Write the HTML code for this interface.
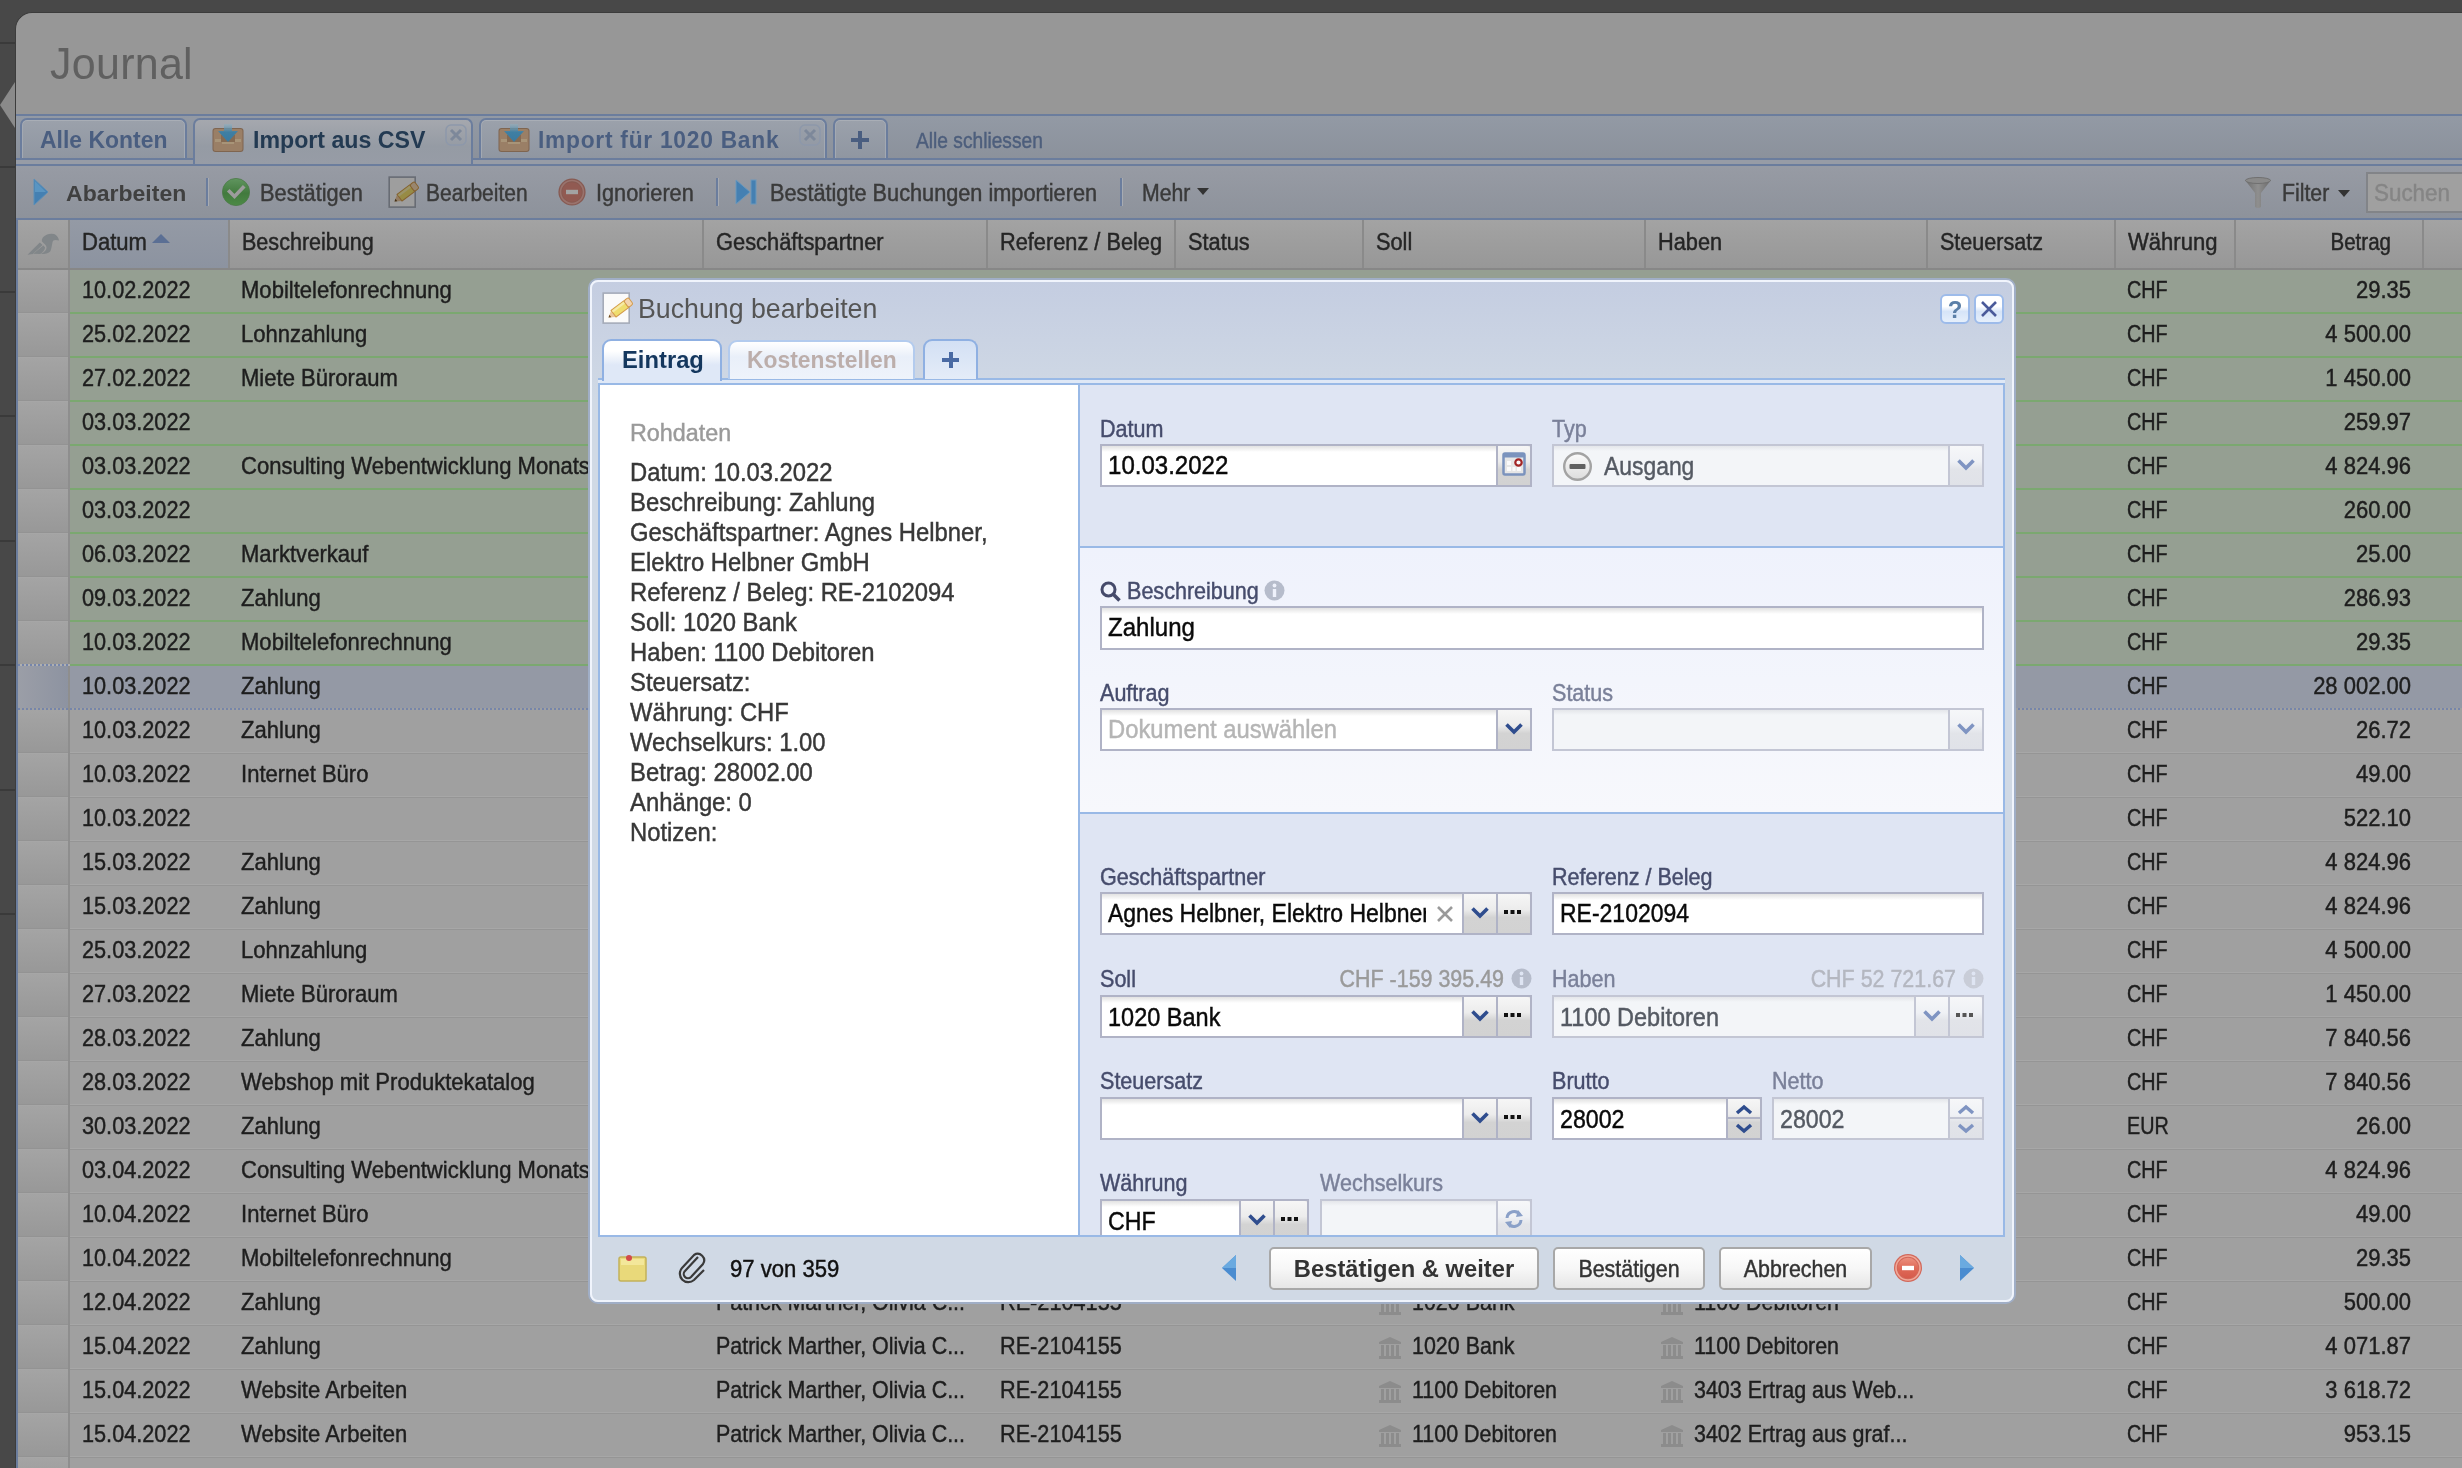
<!DOCTYPE html><html><head><meta charset="utf-8"><style>
html,body{margin:0;padding:0}
body{width:2462px;height:1468px;overflow:hidden;position:relative;background:#484848;font-family:"Liberation Sans", sans-serif}
.t{position:absolute;white-space:pre;font-family:"Liberation Sans", sans-serif}
#root{position:absolute;left:0;top:0;width:2462px;height:1468px;will-change:transform}
.r{position:absolute;box-sizing:border-box}
</style></head><body><div id="root">
<div class="r" style="left:0px;top:42px;width:15px;height:2px;background:#3a3a3a"></div>
<div class="r" style="left:0px;top:166px;width:15px;height:2px;background:#3a3a3a"></div>
<div class="r" style="left:0px;top:291px;width:15px;height:2px;background:#3a3a3a"></div>
<div class="r" style="left:0px;top:415px;width:15px;height:2px;background:#3a3a3a"></div>
<div class="r" style="left:0px;top:540px;width:15px;height:2px;background:#3a3a3a"></div>
<div class="r" style="left:0px;top:664px;width:15px;height:2px;background:#3a3a3a"></div>
<div class="r" style="left:0px;top:789px;width:15px;height:2px;background:#3a3a3a"></div>
<div class="r" style="left:0px;top:913px;width:15px;height:2px;background:#3a3a3a"></div>
<svg class="r" style="left:0px;top:82px" width="15" height="46" viewBox="0 0 15 46"><polygon points="15,0 15,46 0,23" fill="#8a8a8a"/></svg>
<div class="r" style="left:15px;top:12px;width:2447px;height:1456px;background:#979797;border-top-left-radius:17px;border-top:1px solid #3c3c3c;border-left:1px solid #3c3c3c"></div>
<div class="t" style="left:50px;top:41px;font-size:45px;line-height:45px;color:#606060;font-weight:300;transform:scaleX(0.955);transform-origin:0 0;letter-spacing:0.3px">Journal</div>
<div class="r" style="left:16px;top:114px;width:2446px;height:51px;background:linear-gradient(#939aa5,#8a909a)"></div>
<div class="r" style="left:16px;top:114px;width:2446px;height:2px;background:#6b7d9d"></div>
<div class="r" style="left:16px;top:158px;width:2446px;height:2px;background:#6b7d9d"></div>
<div class="r" style="left:16px;top:160px;width:2446px;height:4px;background:#979ca6"></div>
<div class="r" style="left:16px;top:164px;width:2446px;height:2px;background:#6b7d9d"></div>
<div class="r" style="left:20px;top:118px;width:167px;height:41px;background:linear-gradient(#9ba1ab,#8f96a1);border:2px solid #6b7d9d;border-bottom:none;border-radius:7px 7px 0 0;box-shadow:inset 0 1px 0 #a9aeb6, inset 1px 0 0 #a3a9b2, inset -1px 0 0 #a3a9b2"></div>
<div class="r" style="left:479px;top:118px;width:348px;height:41px;background:linear-gradient(#9ba1ab,#8f96a1);border:2px solid #6b7d9d;border-bottom:none;border-radius:7px 7px 0 0;box-shadow:inset 0 1px 0 #a9aeb6, inset 1px 0 0 #a3a9b2, inset -1px 0 0 #a3a9b2"></div>
<div class="r" style="left:833px;top:118px;width:55px;height:41px;background:linear-gradient(#9ba1ab,#8f96a1);border:2px solid #6b7d9d;border-bottom:none;border-radius:7px 7px 0 0;box-shadow:inset 0 1px 0 #a9aeb6, inset 1px 0 0 #a3a9b2, inset -1px 0 0 #a3a9b2"></div>
<div class="r" style="left:16px;top:158px;width:2446px;height:2px;background:#6b7d9d"></div>
<div class="r" style="left:193px;top:118px;width:280px;height:46px;background:linear-gradient(#a5a8ae,#959ba4 60%,#979ca6);border:2px solid #6b7d9d;border-bottom:none;border-radius:7px 7px 0 0"></div>
<div class="t" style="left:40px;top:129px;font-size:23.3px;line-height:23.3px;color:#4a5e80;font-weight:700;transform:scaleX(0.985);transform-origin:0 0;">Alle Konten</div>
<div class="t" style="left:253px;top:129px;font-size:23.5px;line-height:23.5px;color:#233a52;font-weight:700;transform:scaleX(0.985);transform-origin:0 0;">Import aus CSV</div>
<div class="t" style="left:538px;top:129px;font-size:23.5px;line-height:23.5px;color:#4a5e80;font-weight:700;transform:scaleX(0.97);transform-origin:0 0;letter-spacing:0.75px">Import für 1020 Bank</div>
<div class="t" style="left:916px;top:130px;font-size:21.8px;line-height:21.8px;color:#4d5e7c;font-weight:400;transform:scaleX(0.88);transform-origin:0 0;-webkit-text-stroke:0.45px currentColor;">Alle schliessen</div>
<div class="r" style="left:851px;top:138px;width:18px;height:4px;background:#4a5e80"></div>
<div class="r" style="left:858px;top:131px;width:4px;height:18px;background:#4a5e80"></div>
<svg class="r" style="left:212px;top:123px" width="32" height="30" viewBox="0 0 32 30">
<defs><linearGradient id="arw" x1="0" y1="0" x2="0" y2="1"><stop offset="0" stop-color="#8fb0c0" stop-opacity="0.5"/><stop offset="0.45" stop-color="#3f7fa3"/><stop offset="1" stop-color="#3a7aa0"/></linearGradient></defs>
<rect x="0.5" y="5" width="31" height="24" rx="3" fill="#7f6550"/>
<rect x="1.5" y="6" width="29" height="22" rx="2" fill="#9a7f66"/>
<rect x="3" y="16" width="8" height="3" fill="#a89478"/>
<rect x="21" y="16" width="8" height="3" fill="#a89478"/>
<rect x="10" y="19" width="12" height="2" fill="#a89478"/>
<rect x="9" y="12" width="14" height="7" fill="#856a52"/>
<path d="M12 1 h8 v7 h6 l-10 11 l-10 -11 h6z" fill="url(#arw)"/>
</svg>
<svg class="r" style="left:498px;top:123px" width="32" height="30" viewBox="0 0 32 30">
<defs><linearGradient id="arw" x1="0" y1="0" x2="0" y2="1"><stop offset="0" stop-color="#8fb0c0" stop-opacity="0.5"/><stop offset="0.45" stop-color="#3f7fa3"/><stop offset="1" stop-color="#3a7aa0"/></linearGradient></defs>
<rect x="0.5" y="5" width="31" height="24" rx="3" fill="#7f6550"/>
<rect x="1.5" y="6" width="29" height="22" rx="2" fill="#9a7f66"/>
<rect x="3" y="16" width="8" height="3" fill="#a89478"/>
<rect x="21" y="16" width="8" height="3" fill="#a89478"/>
<rect x="10" y="19" width="12" height="2" fill="#a89478"/>
<rect x="9" y="12" width="14" height="7" fill="#856a52"/>
<path d="M12 1 h8 v7 h6 l-10 11 l-10 -11 h6z" fill="url(#arw)"/>
</svg>
<svg class="r" style="left:445px;top:124px" width="22" height="22" viewBox="0 0 22 22"><rect x="1" y="1" width="20" height="20" rx="5" fill="none" stroke="#8d98aa" stroke-width="1.5"/><path d="M6 6 L16 16 M16 6 L6 16" stroke="#7d889a" stroke-width="3"/></svg>
<svg class="r" style="left:799px;top:124px" width="22" height="22" viewBox="0 0 22 22"><rect x="1" y="1" width="20" height="20" rx="5" fill="none" stroke="#8d98aa" stroke-width="1.5"/><path d="M6 6 L16 16 M16 6 L6 16" stroke="#7d889a" stroke-width="3"/></svg>
<div class="r" style="left:16px;top:166px;width:2446px;height:53px;background:linear-gradient(#979ba4,#8d929b)"></div>
<div class="r" style="left:16px;top:218px;width:2446px;height:2px;background:#6b7d9d"></div>
<svg class="r" style="left:33px;top:178px" width="16" height="28" viewBox="0 0 16 28"><polygon points="1,1 15,14 1,27" fill="#4580b2" stroke="#5d8fb8" stroke-width="1"/><polygon points="2,3 13,14 2,14" fill="#5a95c2"/></svg>
<div class="t" style="left:66px;top:182px;font-size:22.8px;line-height:22.8px;color:#404040;font-weight:700;transform:scaleX(1.01);transform-origin:0 0;">Abarbeiten</div>
<div class="r" style="left:206px;top:178px;width:3px;height:28px;background:linear-gradient(90deg,#6b7d9d 0,#6b7d9d 2px,#a7abb2 2px)"></div>
<svg class="r" style="left:222px;top:178px" width="28" height="28" viewBox="0 0 28 28"><defs><linearGradient id="gk" x1="0" y1="0" x2="0" y2="1"><stop offset="0" stop-color="#60955f"/><stop offset="0.55" stop-color="#427a3e"/><stop offset="1" stop-color="#4c8a46"/></linearGradient></defs><circle cx="14" cy="14" r="13.6" fill="url(#gk)" stroke="#4b7a48" stroke-width="0.8"/><path d="M7.5 13.5 L12.5 18.5 L21 9.5" stroke="#9c9c9c" stroke-width="3.6" fill="none" stroke-linecap="square"/></svg>
<div class="t" style="left:260px;top:182px;font-size:23.1px;line-height:23.1px;color:#3a3a3a;font-weight:400;transform:scaleX(0.943);transform-origin:0 0;-webkit-text-stroke:0.45px currentColor;">Bestätigen</div>
<svg class="r" style="left:384px;top:172px;filter:brightness(0.63);" width="38" height="40" viewBox="0 0 38 40"><rect x="5.2" y="5.1" width="26" height="30" fill="#fafafa" stroke="#a5abb8" stroke-width="1.6"/>
<g transform="translate(10.5,29.5) rotate(-37) scale(0.9)">
<path d="M0 0 L7 -4.6 L7 4.6 Z" fill="#ebc79c"/>
<path d="M0 0 L2.6 -1.7 L2.6 1.7 Z" fill="#6a4a22"/>
<rect x="7" y="-4.6" width="17.5" height="9.2" fill="#efdd6e" stroke="#d39a4a" stroke-width="1.1"/>
<rect x="7.5" y="-3.8" width="16.5" height="2.5" fill="#f6eaa6"/>
<rect x="24.5" y="-4.6" width="6.5" height="9.2" rx="2.2" fill="#f3d4ae" stroke="#d39a4a" stroke-width="1.1"/>
</g></svg>
<div class="t" style="left:426px;top:182px;font-size:23.1px;line-height:23.1px;color:#3a3a3a;font-weight:400;transform:scaleX(0.91);transform-origin:0 0;-webkit-text-stroke:0.45px currentColor;">Bearbeiten</div>
<svg class="r" style="left:558px;top:178px" width="28" height="28" viewBox="0 0 28 28"><circle cx="14" cy="14" r="13.6" fill="#875a52"/><circle cx="14" cy="14" r="11.5" fill="none" stroke="#9a736d" stroke-width="1.6"/><circle cx="14" cy="14" r="9.8" fill="#915a52"/><rect x="8" y="11.8" width="12" height="4.4" fill="#a3a3a3"/></svg>
<div class="t" style="left:596px;top:182px;font-size:23.1px;line-height:23.1px;color:#3a3a3a;font-weight:400;transform:scaleX(0.94);transform-origin:0 0;-webkit-text-stroke:0.45px currentColor;">Ignorieren</div>
<div class="r" style="left:716px;top:178px;width:3px;height:28px;background:linear-gradient(90deg,#6b7d9d 0,#6b7d9d 2px,#a7abb2 2px)"></div>
<svg class="r" style="left:735px;top:178px" width="22" height="28" viewBox="0 0 22 28"><polygon points="1,2 15,14 1,26" fill="#4580b2" stroke="#6a98bd" stroke-width="1"/><rect x="16" y="2" width="5" height="24" fill="#4580b2" stroke="#6a98bd" stroke-width="1"/></svg>
<div class="t" style="left:770px;top:182px;font-size:23.1px;line-height:23.1px;color:#3a3a3a;font-weight:400;transform:scaleX(0.94);transform-origin:0 0;-webkit-text-stroke:0.45px currentColor;">Bestätigte Buchungen importieren</div>
<div class="r" style="left:1120px;top:178px;width:3px;height:28px;background:linear-gradient(90deg,#6b7d9d 0,#6b7d9d 2px,#a7abb2 2px)"></div>
<div class="t" style="left:1142px;top:182px;font-size:23.1px;line-height:23.1px;color:#3a3a3a;font-weight:400;transform:scaleX(0.92);transform-origin:0 0;-webkit-text-stroke:0.45px currentColor;">Mehr</div>
<svg class="r" style="left:1197px;top:188px" width="12" height="8" viewBox="0 0 12 8"><polygon points="0,0 12,0 6,7" fill="#333"/></svg>
<svg class="r" style="left:2243px;top:176px" width="30" height="34" viewBox="0 0 30 34"><defs><linearGradient id="fn" x1="0" x2="1"><stop offset="0" stop-color="#6d6d6d"/><stop offset="0.5" stop-color="#8f8f8f"/><stop offset="1" stop-color="#6a6a6a"/></linearGradient></defs><path d="M2 4 Q15 0 28 4 L18 17 L18 31 Q15 33 12 31 L12 17 Z" fill="url(#fn)"/><ellipse cx="15" cy="4.5" rx="12.5" ry="3" fill="#8a8a8a" stroke="#707070" stroke-width="1"/></svg>
<div class="t" style="left:2282px;top:182px;font-size:23.1px;line-height:23.1px;color:#3a3a3a;font-weight:400;transform:scaleX(0.92);transform-origin:0 0;-webkit-text-stroke:0.45px currentColor;">Filter</div>
<svg class="r" style="left:2338px;top:190px" width="12" height="8" viewBox="0 0 12 8"><polygon points="0,0 12,0 6,7" fill="#333"/></svg>
<div class="r" style="left:2366px;top:172px;width:100px;height:41px;background:#a0a0a0;border:2px solid #828488"></div>
<div class="t" style="left:2374px;top:182px;font-size:23.6px;line-height:23.6px;color:#858585;font-weight:400;transform:scaleX(0.95);transform-origin:0 0;-webkit-text-stroke:0.45px currentColor;">Suchen</div>
<div class="r" style="left:16px;top:220px;width:2446px;height:1248px;background:#a0a0a0"></div>
<div class="r" style="left:16px;top:220px;width:2px;height:1248px;background:#6b7d9d"></div>
<div class="r" style="left:18px;top:220px;width:2444px;height:49px;background:linear-gradient(#a3a3a3,#979797)"></div>
<div class="r" style="left:69px;top:220px;width:160px;height:48px;background:linear-gradient(#949aa5,#8c93a0)"></div>
<div class="r" style="left:18px;top:268px;width:2444px;height:2px;background:#878787"></div>
<div class="r" style="left:68px;top:220px;width:2px;height:48px;background:#8a8a8a"></div>
<div class="r" style="left:228px;top:220px;width:2px;height:48px;background:#8a8a8a"></div>
<div class="r" style="left:702px;top:220px;width:2px;height:48px;background:#8a8a8a"></div>
<div class="r" style="left:986px;top:220px;width:2px;height:48px;background:#8a8a8a"></div>
<div class="r" style="left:1174px;top:220px;width:2px;height:48px;background:#8a8a8a"></div>
<div class="r" style="left:1362px;top:220px;width:2px;height:48px;background:#8a8a8a"></div>
<div class="r" style="left:1644px;top:220px;width:2px;height:48px;background:#8a8a8a"></div>
<div class="r" style="left:1926px;top:220px;width:2px;height:48px;background:#8a8a8a"></div>
<div class="r" style="left:2114px;top:220px;width:2px;height:48px;background:#8a8a8a"></div>
<div class="r" style="left:2234px;top:220px;width:2px;height:48px;background:#8a8a8a"></div>
<div class="r" style="left:2422px;top:220px;width:2px;height:48px;background:#8a8a8a"></div>
<svg class="r" style="left:17px;top:222px" width="53" height="44" viewBox="0 0 53 44"><path d="M34.5 11.7 C39 11.5 41.5 15 42 18.5 C40 17.8 37.5 17.5 36 18.8 C35 21 35 25 33.5 29 C32 31.5 28 32 23.5 32 C27 30.5 29.8 28 29.5 25 C29 23 27 21.5 25 19.5 C24 16 28 12 34.5 11.7 Z" fill="#818689"/><path d="M22.8 20.5 L10.5 32.7 L15.8 32 L25.6 23 Z" fill="#818689"/><path d="M26.3 23.6 L16.3 31.8 L23.2 31.9 C26 30 28.2 27.5 28 25.2 Z" fill="#818689"/></svg>
<div class="t" style="left:82px;top:231px;font-size:23.1px;line-height:23.1px;color:#252525;font-weight:400;transform:scaleX(0.955);transform-origin:0 0;-webkit-text-stroke:0.45px currentColor;">Datum</div>
<div class="t" style="left:242px;top:231px;font-size:23.1px;line-height:23.1px;color:#252525;font-weight:400;transform:scaleX(0.933);transform-origin:0 0;-webkit-text-stroke:0.45px currentColor;">Beschreibung</div>
<div class="t" style="left:716px;top:231px;font-size:23.1px;line-height:23.1px;color:#252525;font-weight:400;transform:scaleX(0.946);transform-origin:0 0;-webkit-text-stroke:0.45px currentColor;">Geschäftspartner</div>
<div class="t" style="left:1000px;top:231px;font-size:23.1px;line-height:23.1px;color:#252525;font-weight:400;transform:scaleX(0.942);transform-origin:0 0;-webkit-text-stroke:0.45px currentColor;">Referenz / Beleg</div>
<div class="t" style="left:1188px;top:231px;font-size:23.1px;line-height:23.1px;color:#252525;font-weight:400;transform:scaleX(0.942);transform-origin:0 0;-webkit-text-stroke:0.45px currentColor;">Status</div>
<div class="t" style="left:1376px;top:231px;font-size:23.1px;line-height:23.1px;color:#252525;font-weight:400;transform:scaleX(0.942);transform-origin:0 0;-webkit-text-stroke:0.45px currentColor;">Soll</div>
<div class="t" style="left:1658px;top:231px;font-size:23.1px;line-height:23.1px;color:#252525;font-weight:400;transform:scaleX(0.942);transform-origin:0 0;-webkit-text-stroke:0.45px currentColor;">Haben</div>
<div class="t" style="left:1940px;top:231px;font-size:23.1px;line-height:23.1px;color:#252525;font-weight:400;transform:scaleX(0.933);transform-origin:0 0;-webkit-text-stroke:0.45px currentColor;">Steuersatz</div>
<div class="t" style="left:2128px;top:231px;font-size:23.1px;line-height:23.1px;color:#252525;font-weight:400;transform:scaleX(0.955);transform-origin:0 0;-webkit-text-stroke:0.45px currentColor;">Währung</div>
<div class="t" style="left:1591px;width:800px;text-align:right;top:231px;font-size:23.1px;line-height:23.1px;color:#252525;font-weight:400;transform:scaleX(0.89);transform-origin:100% 0;-webkit-text-stroke:0.45px currentColor;">Betrag</div>
<svg class="r" style="left:152px;top:234px" width="18" height="10" viewBox="0 0 18 10"><polygon points="0,9 18,9 9,0" fill="#5b6f94"/></svg>
<div class="r" style="left:70px;top:270px;width:2392px;height:42px;background:#959f92"></div>
<div class="r" style="left:70px;top:312px;width:2392px;height:2px;background:#7ba870"></div>
<div class="r" style="left:18px;top:270px;width:50px;height:42px;background:linear-gradient(#a4a4a4,#989898)"></div>
<div class="r" style="left:18px;top:312px;width:50px;height:1px;background:#939393"></div>
<div class="r" style="left:18px;top:313px;width:50px;height:1px;background:#a6a6a6"></div>
<div class="r" style="left:68px;top:270px;width:2px;height:44px;background:#8e8e8e"></div>
<div class="t" style="left:82px;top:278px;font-size:24.1px;line-height:24.1px;color:#1e1e1e;font-weight:400;transform:scaleX(0.9);transform-origin:0 0;-webkit-text-stroke:0.45px currentColor;">10.02.2022</div>
<div class="t" style="left:241px;top:278px;font-size:24.1px;line-height:24.1px;color:#1e1e1e;font-weight:400;transform:scaleX(0.915);transform-origin:0 0;-webkit-text-stroke:0.45px currentColor;">Mobiltelefonrechnung</div>
<div class="t" style="left:2127px;top:278px;font-size:24.1px;line-height:24.1px;color:#1e1e1e;font-weight:400;transform:scaleX(0.82);transform-origin:0 0;-webkit-text-stroke:0.45px currentColor;">CHF</div>
<div class="t" style="left:1611px;width:800px;text-align:right;top:278px;font-size:24.1px;line-height:24.1px;color:#1e1e1e;font-weight:400;transform:scaleX(0.913);transform-origin:100% 0;-webkit-text-stroke:0.45px currentColor;">29.35</div>
<div class="r" style="left:70px;top:314px;width:2392px;height:42px;background:#959f92"></div>
<div class="r" style="left:70px;top:356px;width:2392px;height:2px;background:#7ba870"></div>
<div class="r" style="left:18px;top:314px;width:50px;height:42px;background:linear-gradient(#a4a4a4,#989898)"></div>
<div class="r" style="left:18px;top:356px;width:50px;height:1px;background:#939393"></div>
<div class="r" style="left:18px;top:357px;width:50px;height:1px;background:#a6a6a6"></div>
<div class="r" style="left:68px;top:314px;width:2px;height:44px;background:#8e8e8e"></div>
<div class="t" style="left:82px;top:322px;font-size:24.1px;line-height:24.1px;color:#1e1e1e;font-weight:400;transform:scaleX(0.9);transform-origin:0 0;-webkit-text-stroke:0.45px currentColor;">25.02.2022</div>
<div class="t" style="left:241px;top:322px;font-size:24.1px;line-height:24.1px;color:#1e1e1e;font-weight:400;transform:scaleX(0.915);transform-origin:0 0;-webkit-text-stroke:0.45px currentColor;">Lohnzahlung</div>
<div class="t" style="left:2127px;top:322px;font-size:24.1px;line-height:24.1px;color:#1e1e1e;font-weight:400;transform:scaleX(0.82);transform-origin:0 0;-webkit-text-stroke:0.45px currentColor;">CHF</div>
<div class="t" style="left:1611px;width:800px;text-align:right;top:322px;font-size:24.1px;line-height:24.1px;color:#1e1e1e;font-weight:400;transform:scaleX(0.913);transform-origin:100% 0;-webkit-text-stroke:0.45px currentColor;">4 500.00</div>
<div class="r" style="left:70px;top:358px;width:2392px;height:42px;background:#959f92"></div>
<div class="r" style="left:70px;top:400px;width:2392px;height:2px;background:#7ba870"></div>
<div class="r" style="left:18px;top:358px;width:50px;height:42px;background:linear-gradient(#a4a4a4,#989898)"></div>
<div class="r" style="left:18px;top:400px;width:50px;height:1px;background:#939393"></div>
<div class="r" style="left:18px;top:401px;width:50px;height:1px;background:#a6a6a6"></div>
<div class="r" style="left:68px;top:358px;width:2px;height:44px;background:#8e8e8e"></div>
<div class="t" style="left:82px;top:366px;font-size:24.1px;line-height:24.1px;color:#1e1e1e;font-weight:400;transform:scaleX(0.9);transform-origin:0 0;-webkit-text-stroke:0.45px currentColor;">27.02.2022</div>
<div class="t" style="left:241px;top:366px;font-size:24.1px;line-height:24.1px;color:#1e1e1e;font-weight:400;transform:scaleX(0.915);transform-origin:0 0;-webkit-text-stroke:0.45px currentColor;">Miete Büroraum</div>
<div class="t" style="left:2127px;top:366px;font-size:24.1px;line-height:24.1px;color:#1e1e1e;font-weight:400;transform:scaleX(0.82);transform-origin:0 0;-webkit-text-stroke:0.45px currentColor;">CHF</div>
<div class="t" style="left:1611px;width:800px;text-align:right;top:366px;font-size:24.1px;line-height:24.1px;color:#1e1e1e;font-weight:400;transform:scaleX(0.913);transform-origin:100% 0;-webkit-text-stroke:0.45px currentColor;">1 450.00</div>
<div class="r" style="left:70px;top:402px;width:2392px;height:42px;background:#959f92"></div>
<div class="r" style="left:70px;top:444px;width:2392px;height:2px;background:#7ba870"></div>
<div class="r" style="left:18px;top:402px;width:50px;height:42px;background:linear-gradient(#a4a4a4,#989898)"></div>
<div class="r" style="left:18px;top:444px;width:50px;height:1px;background:#939393"></div>
<div class="r" style="left:18px;top:445px;width:50px;height:1px;background:#a6a6a6"></div>
<div class="r" style="left:68px;top:402px;width:2px;height:44px;background:#8e8e8e"></div>
<div class="t" style="left:82px;top:410px;font-size:24.1px;line-height:24.1px;color:#1e1e1e;font-weight:400;transform:scaleX(0.9);transform-origin:0 0;-webkit-text-stroke:0.45px currentColor;">03.03.2022</div>
<div class="t" style="left:2127px;top:410px;font-size:24.1px;line-height:24.1px;color:#1e1e1e;font-weight:400;transform:scaleX(0.82);transform-origin:0 0;-webkit-text-stroke:0.45px currentColor;">CHF</div>
<div class="t" style="left:1611px;width:800px;text-align:right;top:410px;font-size:24.1px;line-height:24.1px;color:#1e1e1e;font-weight:400;transform:scaleX(0.913);transform-origin:100% 0;-webkit-text-stroke:0.45px currentColor;">259.97</div>
<div class="r" style="left:70px;top:446px;width:2392px;height:42px;background:#959f92"></div>
<div class="r" style="left:70px;top:488px;width:2392px;height:2px;background:#7ba870"></div>
<div class="r" style="left:18px;top:446px;width:50px;height:42px;background:linear-gradient(#a4a4a4,#989898)"></div>
<div class="r" style="left:18px;top:488px;width:50px;height:1px;background:#939393"></div>
<div class="r" style="left:18px;top:489px;width:50px;height:1px;background:#a6a6a6"></div>
<div class="r" style="left:68px;top:446px;width:2px;height:44px;background:#8e8e8e"></div>
<div class="t" style="left:82px;top:454px;font-size:24.1px;line-height:24.1px;color:#1e1e1e;font-weight:400;transform:scaleX(0.9);transform-origin:0 0;-webkit-text-stroke:0.45px currentColor;">03.03.2022</div>
<div class="t" style="left:241px;top:454px;font-size:24.1px;line-height:24.1px;color:#1e1e1e;font-weight:400;transform:scaleX(0.915);transform-origin:0 0;-webkit-text-stroke:0.45px currentColor;">Consulting Webentwicklung Monatsa</div>
<div class="t" style="left:2127px;top:454px;font-size:24.1px;line-height:24.1px;color:#1e1e1e;font-weight:400;transform:scaleX(0.82);transform-origin:0 0;-webkit-text-stroke:0.45px currentColor;">CHF</div>
<div class="t" style="left:1611px;width:800px;text-align:right;top:454px;font-size:24.1px;line-height:24.1px;color:#1e1e1e;font-weight:400;transform:scaleX(0.913);transform-origin:100% 0;-webkit-text-stroke:0.45px currentColor;">4 824.96</div>
<div class="r" style="left:70px;top:490px;width:2392px;height:42px;background:#959f92"></div>
<div class="r" style="left:70px;top:532px;width:2392px;height:2px;background:#7ba870"></div>
<div class="r" style="left:18px;top:490px;width:50px;height:42px;background:linear-gradient(#a4a4a4,#989898)"></div>
<div class="r" style="left:18px;top:532px;width:50px;height:1px;background:#939393"></div>
<div class="r" style="left:18px;top:533px;width:50px;height:1px;background:#a6a6a6"></div>
<div class="r" style="left:68px;top:490px;width:2px;height:44px;background:#8e8e8e"></div>
<div class="t" style="left:82px;top:498px;font-size:24.1px;line-height:24.1px;color:#1e1e1e;font-weight:400;transform:scaleX(0.9);transform-origin:0 0;-webkit-text-stroke:0.45px currentColor;">03.03.2022</div>
<div class="t" style="left:2127px;top:498px;font-size:24.1px;line-height:24.1px;color:#1e1e1e;font-weight:400;transform:scaleX(0.82);transform-origin:0 0;-webkit-text-stroke:0.45px currentColor;">CHF</div>
<div class="t" style="left:1611px;width:800px;text-align:right;top:498px;font-size:24.1px;line-height:24.1px;color:#1e1e1e;font-weight:400;transform:scaleX(0.913);transform-origin:100% 0;-webkit-text-stroke:0.45px currentColor;">260.00</div>
<div class="r" style="left:70px;top:534px;width:2392px;height:42px;background:#959f92"></div>
<div class="r" style="left:70px;top:576px;width:2392px;height:2px;background:#7ba870"></div>
<div class="r" style="left:18px;top:534px;width:50px;height:42px;background:linear-gradient(#a4a4a4,#989898)"></div>
<div class="r" style="left:18px;top:576px;width:50px;height:1px;background:#939393"></div>
<div class="r" style="left:18px;top:577px;width:50px;height:1px;background:#a6a6a6"></div>
<div class="r" style="left:68px;top:534px;width:2px;height:44px;background:#8e8e8e"></div>
<div class="t" style="left:82px;top:542px;font-size:24.1px;line-height:24.1px;color:#1e1e1e;font-weight:400;transform:scaleX(0.9);transform-origin:0 0;-webkit-text-stroke:0.45px currentColor;">06.03.2022</div>
<div class="t" style="left:241px;top:542px;font-size:24.1px;line-height:24.1px;color:#1e1e1e;font-weight:400;transform:scaleX(0.915);transform-origin:0 0;-webkit-text-stroke:0.45px currentColor;">Marktverkauf</div>
<div class="t" style="left:2127px;top:542px;font-size:24.1px;line-height:24.1px;color:#1e1e1e;font-weight:400;transform:scaleX(0.82);transform-origin:0 0;-webkit-text-stroke:0.45px currentColor;">CHF</div>
<div class="t" style="left:1611px;width:800px;text-align:right;top:542px;font-size:24.1px;line-height:24.1px;color:#1e1e1e;font-weight:400;transform:scaleX(0.913);transform-origin:100% 0;-webkit-text-stroke:0.45px currentColor;">25.00</div>
<div class="r" style="left:70px;top:578px;width:2392px;height:42px;background:#959f92"></div>
<div class="r" style="left:70px;top:620px;width:2392px;height:2px;background:#7ba870"></div>
<div class="r" style="left:18px;top:578px;width:50px;height:42px;background:linear-gradient(#a4a4a4,#989898)"></div>
<div class="r" style="left:18px;top:620px;width:50px;height:1px;background:#939393"></div>
<div class="r" style="left:18px;top:621px;width:50px;height:1px;background:#a6a6a6"></div>
<div class="r" style="left:68px;top:578px;width:2px;height:44px;background:#8e8e8e"></div>
<div class="t" style="left:82px;top:586px;font-size:24.1px;line-height:24.1px;color:#1e1e1e;font-weight:400;transform:scaleX(0.9);transform-origin:0 0;-webkit-text-stroke:0.45px currentColor;">09.03.2022</div>
<div class="t" style="left:241px;top:586px;font-size:24.1px;line-height:24.1px;color:#1e1e1e;font-weight:400;transform:scaleX(0.915);transform-origin:0 0;-webkit-text-stroke:0.45px currentColor;">Zahlung</div>
<div class="t" style="left:2127px;top:586px;font-size:24.1px;line-height:24.1px;color:#1e1e1e;font-weight:400;transform:scaleX(0.82);transform-origin:0 0;-webkit-text-stroke:0.45px currentColor;">CHF</div>
<div class="t" style="left:1611px;width:800px;text-align:right;top:586px;font-size:24.1px;line-height:24.1px;color:#1e1e1e;font-weight:400;transform:scaleX(0.913);transform-origin:100% 0;-webkit-text-stroke:0.45px currentColor;">286.93</div>
<div class="r" style="left:70px;top:622px;width:2392px;height:42px;background:#959f92"></div>
<div class="r" style="left:70px;top:664px;width:2392px;height:2px;background:#7ba870"></div>
<div class="r" style="left:18px;top:622px;width:50px;height:42px;background:linear-gradient(#a4a4a4,#989898)"></div>
<div class="r" style="left:18px;top:664px;width:50px;height:1px;background:#939393"></div>
<div class="r" style="left:18px;top:665px;width:50px;height:1px;background:#a6a6a6"></div>
<div class="r" style="left:68px;top:622px;width:2px;height:44px;background:#8e8e8e"></div>
<div class="t" style="left:82px;top:630px;font-size:24.1px;line-height:24.1px;color:#1e1e1e;font-weight:400;transform:scaleX(0.9);transform-origin:0 0;-webkit-text-stroke:0.45px currentColor;">10.03.2022</div>
<div class="t" style="left:241px;top:630px;font-size:24.1px;line-height:24.1px;color:#1e1e1e;font-weight:400;transform:scaleX(0.915);transform-origin:0 0;-webkit-text-stroke:0.45px currentColor;">Mobiltelefonrechnung</div>
<div class="t" style="left:2127px;top:630px;font-size:24.1px;line-height:24.1px;color:#1e1e1e;font-weight:400;transform:scaleX(0.82);transform-origin:0 0;-webkit-text-stroke:0.45px currentColor;">CHF</div>
<div class="t" style="left:1611px;width:800px;text-align:right;top:630px;font-size:24.1px;line-height:24.1px;color:#1e1e1e;font-weight:400;transform:scaleX(0.913);transform-origin:100% 0;-webkit-text-stroke:0.45px currentColor;">29.35</div>
<div class="r" style="left:18px;top:666px;width:2444px;height:42px;background:#9499a5"></div>
<div class="r" style="left:18px;top:708px;width:2444px;height:2px;background:repeating-linear-gradient(90deg,#7585ab 0 2px,transparent 2px 4px)"></div>
<div class="r" style="left:18px;top:664px;width:52px;height:2px;background:repeating-linear-gradient(90deg,#7585ab 0 2px,#b0b0b0 2px 4px)"></div>
<div class="r" style="left:18px;top:666px;width:50px;height:42px;background:linear-gradient(90deg,#9b9ea7,#8d93a1)"></div>
<div class="r" style="left:68px;top:666px;width:2px;height:44px;background:#8e8e8e"></div>
<div class="t" style="left:82px;top:674px;font-size:24.1px;line-height:24.1px;color:#1e1e1e;font-weight:400;transform:scaleX(0.9);transform-origin:0 0;-webkit-text-stroke:0.45px currentColor;">10.03.2022</div>
<div class="t" style="left:241px;top:674px;font-size:24.1px;line-height:24.1px;color:#1e1e1e;font-weight:400;transform:scaleX(0.915);transform-origin:0 0;-webkit-text-stroke:0.45px currentColor;">Zahlung</div>
<div class="t" style="left:2127px;top:674px;font-size:24.1px;line-height:24.1px;color:#1e1e1e;font-weight:400;transform:scaleX(0.82);transform-origin:0 0;-webkit-text-stroke:0.45px currentColor;">CHF</div>
<div class="t" style="left:1611px;width:800px;text-align:right;top:674px;font-size:24.1px;line-height:24.1px;color:#1e1e1e;font-weight:400;transform:scaleX(0.913);transform-origin:100% 0;-webkit-text-stroke:0.45px currentColor;">28 002.00</div>
<div class="r" style="left:70px;top:752px;width:2392px;height:1px;background:#a7a7a7"></div>
<div class="r" style="left:70px;top:753px;width:2392px;height:1px;background:#959595"></div>
<div class="r" style="left:18px;top:710px;width:50px;height:42px;background:linear-gradient(#a4a4a4,#989898)"></div>
<div class="r" style="left:18px;top:752px;width:50px;height:1px;background:#939393"></div>
<div class="r" style="left:18px;top:753px;width:50px;height:1px;background:#a6a6a6"></div>
<div class="r" style="left:68px;top:710px;width:2px;height:44px;background:#8e8e8e"></div>
<div class="t" style="left:82px;top:718px;font-size:24.1px;line-height:24.1px;color:#1e1e1e;font-weight:400;transform:scaleX(0.9);transform-origin:0 0;-webkit-text-stroke:0.45px currentColor;">10.03.2022</div>
<div class="t" style="left:241px;top:718px;font-size:24.1px;line-height:24.1px;color:#1e1e1e;font-weight:400;transform:scaleX(0.915);transform-origin:0 0;-webkit-text-stroke:0.45px currentColor;">Zahlung</div>
<div class="t" style="left:2127px;top:718px;font-size:24.1px;line-height:24.1px;color:#1e1e1e;font-weight:400;transform:scaleX(0.82);transform-origin:0 0;-webkit-text-stroke:0.45px currentColor;">CHF</div>
<div class="t" style="left:1611px;width:800px;text-align:right;top:718px;font-size:24.1px;line-height:24.1px;color:#1e1e1e;font-weight:400;transform:scaleX(0.913);transform-origin:100% 0;-webkit-text-stroke:0.45px currentColor;">26.72</div>
<div class="r" style="left:70px;top:796px;width:2392px;height:1px;background:#a7a7a7"></div>
<div class="r" style="left:70px;top:797px;width:2392px;height:1px;background:#959595"></div>
<div class="r" style="left:18px;top:754px;width:50px;height:42px;background:linear-gradient(#a4a4a4,#989898)"></div>
<div class="r" style="left:18px;top:796px;width:50px;height:1px;background:#939393"></div>
<div class="r" style="left:18px;top:797px;width:50px;height:1px;background:#a6a6a6"></div>
<div class="r" style="left:68px;top:754px;width:2px;height:44px;background:#8e8e8e"></div>
<div class="t" style="left:82px;top:762px;font-size:24.1px;line-height:24.1px;color:#1e1e1e;font-weight:400;transform:scaleX(0.9);transform-origin:0 0;-webkit-text-stroke:0.45px currentColor;">10.03.2022</div>
<div class="t" style="left:241px;top:762px;font-size:24.1px;line-height:24.1px;color:#1e1e1e;font-weight:400;transform:scaleX(0.915);transform-origin:0 0;-webkit-text-stroke:0.45px currentColor;">Internet Büro</div>
<div class="t" style="left:2127px;top:762px;font-size:24.1px;line-height:24.1px;color:#1e1e1e;font-weight:400;transform:scaleX(0.82);transform-origin:0 0;-webkit-text-stroke:0.45px currentColor;">CHF</div>
<div class="t" style="left:1611px;width:800px;text-align:right;top:762px;font-size:24.1px;line-height:24.1px;color:#1e1e1e;font-weight:400;transform:scaleX(0.913);transform-origin:100% 0;-webkit-text-stroke:0.45px currentColor;">49.00</div>
<div class="r" style="left:70px;top:840px;width:2392px;height:1px;background:#a7a7a7"></div>
<div class="r" style="left:70px;top:841px;width:2392px;height:1px;background:#959595"></div>
<div class="r" style="left:18px;top:798px;width:50px;height:42px;background:linear-gradient(#a4a4a4,#989898)"></div>
<div class="r" style="left:18px;top:840px;width:50px;height:1px;background:#939393"></div>
<div class="r" style="left:18px;top:841px;width:50px;height:1px;background:#a6a6a6"></div>
<div class="r" style="left:68px;top:798px;width:2px;height:44px;background:#8e8e8e"></div>
<div class="t" style="left:82px;top:806px;font-size:24.1px;line-height:24.1px;color:#1e1e1e;font-weight:400;transform:scaleX(0.9);transform-origin:0 0;-webkit-text-stroke:0.45px currentColor;">10.03.2022</div>
<div class="t" style="left:2127px;top:806px;font-size:24.1px;line-height:24.1px;color:#1e1e1e;font-weight:400;transform:scaleX(0.82);transform-origin:0 0;-webkit-text-stroke:0.45px currentColor;">CHF</div>
<div class="t" style="left:1611px;width:800px;text-align:right;top:806px;font-size:24.1px;line-height:24.1px;color:#1e1e1e;font-weight:400;transform:scaleX(0.913);transform-origin:100% 0;-webkit-text-stroke:0.45px currentColor;">522.10</div>
<div class="r" style="left:70px;top:884px;width:2392px;height:1px;background:#a7a7a7"></div>
<div class="r" style="left:70px;top:885px;width:2392px;height:1px;background:#959595"></div>
<div class="r" style="left:18px;top:842px;width:50px;height:42px;background:linear-gradient(#a4a4a4,#989898)"></div>
<div class="r" style="left:18px;top:884px;width:50px;height:1px;background:#939393"></div>
<div class="r" style="left:18px;top:885px;width:50px;height:1px;background:#a6a6a6"></div>
<div class="r" style="left:68px;top:842px;width:2px;height:44px;background:#8e8e8e"></div>
<div class="t" style="left:82px;top:850px;font-size:24.1px;line-height:24.1px;color:#1e1e1e;font-weight:400;transform:scaleX(0.9);transform-origin:0 0;-webkit-text-stroke:0.45px currentColor;">15.03.2022</div>
<div class="t" style="left:241px;top:850px;font-size:24.1px;line-height:24.1px;color:#1e1e1e;font-weight:400;transform:scaleX(0.915);transform-origin:0 0;-webkit-text-stroke:0.45px currentColor;">Zahlung</div>
<div class="t" style="left:2127px;top:850px;font-size:24.1px;line-height:24.1px;color:#1e1e1e;font-weight:400;transform:scaleX(0.82);transform-origin:0 0;-webkit-text-stroke:0.45px currentColor;">CHF</div>
<div class="t" style="left:1611px;width:800px;text-align:right;top:850px;font-size:24.1px;line-height:24.1px;color:#1e1e1e;font-weight:400;transform:scaleX(0.913);transform-origin:100% 0;-webkit-text-stroke:0.45px currentColor;">4 824.96</div>
<div class="r" style="left:70px;top:928px;width:2392px;height:1px;background:#a7a7a7"></div>
<div class="r" style="left:70px;top:929px;width:2392px;height:1px;background:#959595"></div>
<div class="r" style="left:18px;top:886px;width:50px;height:42px;background:linear-gradient(#a4a4a4,#989898)"></div>
<div class="r" style="left:18px;top:928px;width:50px;height:1px;background:#939393"></div>
<div class="r" style="left:18px;top:929px;width:50px;height:1px;background:#a6a6a6"></div>
<div class="r" style="left:68px;top:886px;width:2px;height:44px;background:#8e8e8e"></div>
<div class="t" style="left:82px;top:894px;font-size:24.1px;line-height:24.1px;color:#1e1e1e;font-weight:400;transform:scaleX(0.9);transform-origin:0 0;-webkit-text-stroke:0.45px currentColor;">15.03.2022</div>
<div class="t" style="left:241px;top:894px;font-size:24.1px;line-height:24.1px;color:#1e1e1e;font-weight:400;transform:scaleX(0.915);transform-origin:0 0;-webkit-text-stroke:0.45px currentColor;">Zahlung</div>
<div class="t" style="left:2127px;top:894px;font-size:24.1px;line-height:24.1px;color:#1e1e1e;font-weight:400;transform:scaleX(0.82);transform-origin:0 0;-webkit-text-stroke:0.45px currentColor;">CHF</div>
<div class="t" style="left:1611px;width:800px;text-align:right;top:894px;font-size:24.1px;line-height:24.1px;color:#1e1e1e;font-weight:400;transform:scaleX(0.913);transform-origin:100% 0;-webkit-text-stroke:0.45px currentColor;">4 824.96</div>
<div class="r" style="left:70px;top:972px;width:2392px;height:1px;background:#a7a7a7"></div>
<div class="r" style="left:70px;top:973px;width:2392px;height:1px;background:#959595"></div>
<div class="r" style="left:18px;top:930px;width:50px;height:42px;background:linear-gradient(#a4a4a4,#989898)"></div>
<div class="r" style="left:18px;top:972px;width:50px;height:1px;background:#939393"></div>
<div class="r" style="left:18px;top:973px;width:50px;height:1px;background:#a6a6a6"></div>
<div class="r" style="left:68px;top:930px;width:2px;height:44px;background:#8e8e8e"></div>
<div class="t" style="left:82px;top:938px;font-size:24.1px;line-height:24.1px;color:#1e1e1e;font-weight:400;transform:scaleX(0.9);transform-origin:0 0;-webkit-text-stroke:0.45px currentColor;">25.03.2022</div>
<div class="t" style="left:241px;top:938px;font-size:24.1px;line-height:24.1px;color:#1e1e1e;font-weight:400;transform:scaleX(0.915);transform-origin:0 0;-webkit-text-stroke:0.45px currentColor;">Lohnzahlung</div>
<div class="t" style="left:2127px;top:938px;font-size:24.1px;line-height:24.1px;color:#1e1e1e;font-weight:400;transform:scaleX(0.82);transform-origin:0 0;-webkit-text-stroke:0.45px currentColor;">CHF</div>
<div class="t" style="left:1611px;width:800px;text-align:right;top:938px;font-size:24.1px;line-height:24.1px;color:#1e1e1e;font-weight:400;transform:scaleX(0.913);transform-origin:100% 0;-webkit-text-stroke:0.45px currentColor;">4 500.00</div>
<div class="r" style="left:70px;top:1016px;width:2392px;height:1px;background:#a7a7a7"></div>
<div class="r" style="left:70px;top:1017px;width:2392px;height:1px;background:#959595"></div>
<div class="r" style="left:18px;top:974px;width:50px;height:42px;background:linear-gradient(#a4a4a4,#989898)"></div>
<div class="r" style="left:18px;top:1016px;width:50px;height:1px;background:#939393"></div>
<div class="r" style="left:18px;top:1017px;width:50px;height:1px;background:#a6a6a6"></div>
<div class="r" style="left:68px;top:974px;width:2px;height:44px;background:#8e8e8e"></div>
<div class="t" style="left:82px;top:982px;font-size:24.1px;line-height:24.1px;color:#1e1e1e;font-weight:400;transform:scaleX(0.9);transform-origin:0 0;-webkit-text-stroke:0.45px currentColor;">27.03.2022</div>
<div class="t" style="left:241px;top:982px;font-size:24.1px;line-height:24.1px;color:#1e1e1e;font-weight:400;transform:scaleX(0.915);transform-origin:0 0;-webkit-text-stroke:0.45px currentColor;">Miete Büroraum</div>
<div class="t" style="left:2127px;top:982px;font-size:24.1px;line-height:24.1px;color:#1e1e1e;font-weight:400;transform:scaleX(0.82);transform-origin:0 0;-webkit-text-stroke:0.45px currentColor;">CHF</div>
<div class="t" style="left:1611px;width:800px;text-align:right;top:982px;font-size:24.1px;line-height:24.1px;color:#1e1e1e;font-weight:400;transform:scaleX(0.913);transform-origin:100% 0;-webkit-text-stroke:0.45px currentColor;">1 450.00</div>
<div class="r" style="left:70px;top:1060px;width:2392px;height:1px;background:#a7a7a7"></div>
<div class="r" style="left:70px;top:1061px;width:2392px;height:1px;background:#959595"></div>
<div class="r" style="left:18px;top:1018px;width:50px;height:42px;background:linear-gradient(#a4a4a4,#989898)"></div>
<div class="r" style="left:18px;top:1060px;width:50px;height:1px;background:#939393"></div>
<div class="r" style="left:18px;top:1061px;width:50px;height:1px;background:#a6a6a6"></div>
<div class="r" style="left:68px;top:1018px;width:2px;height:44px;background:#8e8e8e"></div>
<div class="t" style="left:82px;top:1026px;font-size:24.1px;line-height:24.1px;color:#1e1e1e;font-weight:400;transform:scaleX(0.9);transform-origin:0 0;-webkit-text-stroke:0.45px currentColor;">28.03.2022</div>
<div class="t" style="left:241px;top:1026px;font-size:24.1px;line-height:24.1px;color:#1e1e1e;font-weight:400;transform:scaleX(0.915);transform-origin:0 0;-webkit-text-stroke:0.45px currentColor;">Zahlung</div>
<div class="t" style="left:2127px;top:1026px;font-size:24.1px;line-height:24.1px;color:#1e1e1e;font-weight:400;transform:scaleX(0.82);transform-origin:0 0;-webkit-text-stroke:0.45px currentColor;">CHF</div>
<div class="t" style="left:1611px;width:800px;text-align:right;top:1026px;font-size:24.1px;line-height:24.1px;color:#1e1e1e;font-weight:400;transform:scaleX(0.913);transform-origin:100% 0;-webkit-text-stroke:0.45px currentColor;">7 840.56</div>
<div class="r" style="left:70px;top:1104px;width:2392px;height:1px;background:#a7a7a7"></div>
<div class="r" style="left:70px;top:1105px;width:2392px;height:1px;background:#959595"></div>
<div class="r" style="left:18px;top:1062px;width:50px;height:42px;background:linear-gradient(#a4a4a4,#989898)"></div>
<div class="r" style="left:18px;top:1104px;width:50px;height:1px;background:#939393"></div>
<div class="r" style="left:18px;top:1105px;width:50px;height:1px;background:#a6a6a6"></div>
<div class="r" style="left:68px;top:1062px;width:2px;height:44px;background:#8e8e8e"></div>
<div class="t" style="left:82px;top:1070px;font-size:24.1px;line-height:24.1px;color:#1e1e1e;font-weight:400;transform:scaleX(0.9);transform-origin:0 0;-webkit-text-stroke:0.45px currentColor;">28.03.2022</div>
<div class="t" style="left:241px;top:1070px;font-size:24.1px;line-height:24.1px;color:#1e1e1e;font-weight:400;transform:scaleX(0.915);transform-origin:0 0;-webkit-text-stroke:0.45px currentColor;">Webshop mit Produktekatalog</div>
<div class="t" style="left:2127px;top:1070px;font-size:24.1px;line-height:24.1px;color:#1e1e1e;font-weight:400;transform:scaleX(0.82);transform-origin:0 0;-webkit-text-stroke:0.45px currentColor;">CHF</div>
<div class="t" style="left:1611px;width:800px;text-align:right;top:1070px;font-size:24.1px;line-height:24.1px;color:#1e1e1e;font-weight:400;transform:scaleX(0.913);transform-origin:100% 0;-webkit-text-stroke:0.45px currentColor;">7 840.56</div>
<div class="r" style="left:70px;top:1148px;width:2392px;height:1px;background:#a7a7a7"></div>
<div class="r" style="left:70px;top:1149px;width:2392px;height:1px;background:#959595"></div>
<div class="r" style="left:18px;top:1106px;width:50px;height:42px;background:linear-gradient(#a4a4a4,#989898)"></div>
<div class="r" style="left:18px;top:1148px;width:50px;height:1px;background:#939393"></div>
<div class="r" style="left:18px;top:1149px;width:50px;height:1px;background:#a6a6a6"></div>
<div class="r" style="left:68px;top:1106px;width:2px;height:44px;background:#8e8e8e"></div>
<div class="t" style="left:82px;top:1114px;font-size:24.1px;line-height:24.1px;color:#1e1e1e;font-weight:400;transform:scaleX(0.9);transform-origin:0 0;-webkit-text-stroke:0.45px currentColor;">30.03.2022</div>
<div class="t" style="left:241px;top:1114px;font-size:24.1px;line-height:24.1px;color:#1e1e1e;font-weight:400;transform:scaleX(0.915);transform-origin:0 0;-webkit-text-stroke:0.45px currentColor;">Zahlung</div>
<div class="t" style="left:2127px;top:1114px;font-size:24.1px;line-height:24.1px;color:#1e1e1e;font-weight:400;transform:scaleX(0.82);transform-origin:0 0;-webkit-text-stroke:0.45px currentColor;">EUR</div>
<div class="t" style="left:1611px;width:800px;text-align:right;top:1114px;font-size:24.1px;line-height:24.1px;color:#1e1e1e;font-weight:400;transform:scaleX(0.913);transform-origin:100% 0;-webkit-text-stroke:0.45px currentColor;">26.00</div>
<div class="r" style="left:70px;top:1192px;width:2392px;height:1px;background:#a7a7a7"></div>
<div class="r" style="left:70px;top:1193px;width:2392px;height:1px;background:#959595"></div>
<div class="r" style="left:18px;top:1150px;width:50px;height:42px;background:linear-gradient(#a4a4a4,#989898)"></div>
<div class="r" style="left:18px;top:1192px;width:50px;height:1px;background:#939393"></div>
<div class="r" style="left:18px;top:1193px;width:50px;height:1px;background:#a6a6a6"></div>
<div class="r" style="left:68px;top:1150px;width:2px;height:44px;background:#8e8e8e"></div>
<div class="t" style="left:82px;top:1158px;font-size:24.1px;line-height:24.1px;color:#1e1e1e;font-weight:400;transform:scaleX(0.9);transform-origin:0 0;-webkit-text-stroke:0.45px currentColor;">03.04.2022</div>
<div class="t" style="left:241px;top:1158px;font-size:24.1px;line-height:24.1px;color:#1e1e1e;font-weight:400;transform:scaleX(0.915);transform-origin:0 0;-webkit-text-stroke:0.45px currentColor;">Consulting Webentwicklung Monatsa</div>
<div class="t" style="left:2127px;top:1158px;font-size:24.1px;line-height:24.1px;color:#1e1e1e;font-weight:400;transform:scaleX(0.82);transform-origin:0 0;-webkit-text-stroke:0.45px currentColor;">CHF</div>
<div class="t" style="left:1611px;width:800px;text-align:right;top:1158px;font-size:24.1px;line-height:24.1px;color:#1e1e1e;font-weight:400;transform:scaleX(0.913);transform-origin:100% 0;-webkit-text-stroke:0.45px currentColor;">4 824.96</div>
<div class="r" style="left:70px;top:1236px;width:2392px;height:1px;background:#a7a7a7"></div>
<div class="r" style="left:70px;top:1237px;width:2392px;height:1px;background:#959595"></div>
<div class="r" style="left:18px;top:1194px;width:50px;height:42px;background:linear-gradient(#a4a4a4,#989898)"></div>
<div class="r" style="left:18px;top:1236px;width:50px;height:1px;background:#939393"></div>
<div class="r" style="left:18px;top:1237px;width:50px;height:1px;background:#a6a6a6"></div>
<div class="r" style="left:68px;top:1194px;width:2px;height:44px;background:#8e8e8e"></div>
<div class="t" style="left:82px;top:1202px;font-size:24.1px;line-height:24.1px;color:#1e1e1e;font-weight:400;transform:scaleX(0.9);transform-origin:0 0;-webkit-text-stroke:0.45px currentColor;">10.04.2022</div>
<div class="t" style="left:241px;top:1202px;font-size:24.1px;line-height:24.1px;color:#1e1e1e;font-weight:400;transform:scaleX(0.915);transform-origin:0 0;-webkit-text-stroke:0.45px currentColor;">Internet Büro</div>
<div class="t" style="left:2127px;top:1202px;font-size:24.1px;line-height:24.1px;color:#1e1e1e;font-weight:400;transform:scaleX(0.82);transform-origin:0 0;-webkit-text-stroke:0.45px currentColor;">CHF</div>
<div class="t" style="left:1611px;width:800px;text-align:right;top:1202px;font-size:24.1px;line-height:24.1px;color:#1e1e1e;font-weight:400;transform:scaleX(0.913);transform-origin:100% 0;-webkit-text-stroke:0.45px currentColor;">49.00</div>
<div class="r" style="left:70px;top:1280px;width:2392px;height:1px;background:#a7a7a7"></div>
<div class="r" style="left:70px;top:1281px;width:2392px;height:1px;background:#959595"></div>
<div class="r" style="left:18px;top:1238px;width:50px;height:42px;background:linear-gradient(#a4a4a4,#989898)"></div>
<div class="r" style="left:18px;top:1280px;width:50px;height:1px;background:#939393"></div>
<div class="r" style="left:18px;top:1281px;width:50px;height:1px;background:#a6a6a6"></div>
<div class="r" style="left:68px;top:1238px;width:2px;height:44px;background:#8e8e8e"></div>
<div class="t" style="left:82px;top:1246px;font-size:24.1px;line-height:24.1px;color:#1e1e1e;font-weight:400;transform:scaleX(0.9);transform-origin:0 0;-webkit-text-stroke:0.45px currentColor;">10.04.2022</div>
<div class="t" style="left:241px;top:1246px;font-size:24.1px;line-height:24.1px;color:#1e1e1e;font-weight:400;transform:scaleX(0.915);transform-origin:0 0;-webkit-text-stroke:0.45px currentColor;">Mobiltelefonrechnung</div>
<div class="t" style="left:2127px;top:1246px;font-size:24.1px;line-height:24.1px;color:#1e1e1e;font-weight:400;transform:scaleX(0.82);transform-origin:0 0;-webkit-text-stroke:0.45px currentColor;">CHF</div>
<div class="t" style="left:1611px;width:800px;text-align:right;top:1246px;font-size:24.1px;line-height:24.1px;color:#1e1e1e;font-weight:400;transform:scaleX(0.913);transform-origin:100% 0;-webkit-text-stroke:0.45px currentColor;">29.35</div>
<div class="r" style="left:70px;top:1324px;width:2392px;height:1px;background:#a7a7a7"></div>
<div class="r" style="left:70px;top:1325px;width:2392px;height:1px;background:#959595"></div>
<div class="r" style="left:18px;top:1282px;width:50px;height:42px;background:linear-gradient(#a4a4a4,#989898)"></div>
<div class="r" style="left:18px;top:1324px;width:50px;height:1px;background:#939393"></div>
<div class="r" style="left:18px;top:1325px;width:50px;height:1px;background:#a6a6a6"></div>
<div class="r" style="left:68px;top:1282px;width:2px;height:44px;background:#8e8e8e"></div>
<div class="t" style="left:82px;top:1290px;font-size:24.1px;line-height:24.1px;color:#1e1e1e;font-weight:400;transform:scaleX(0.9);transform-origin:0 0;-webkit-text-stroke:0.45px currentColor;">12.04.2022</div>
<div class="t" style="left:241px;top:1290px;font-size:24.1px;line-height:24.1px;color:#1e1e1e;font-weight:400;transform:scaleX(0.915);transform-origin:0 0;-webkit-text-stroke:0.45px currentColor;">Zahlung</div>
<div class="t" style="left:2127px;top:1290px;font-size:24.1px;line-height:24.1px;color:#1e1e1e;font-weight:400;transform:scaleX(0.82);transform-origin:0 0;-webkit-text-stroke:0.45px currentColor;">CHF</div>
<div class="t" style="left:1611px;width:800px;text-align:right;top:1290px;font-size:24.1px;line-height:24.1px;color:#1e1e1e;font-weight:400;transform:scaleX(0.913);transform-origin:100% 0;-webkit-text-stroke:0.45px currentColor;">500.00</div>
<div class="t" style="left:716px;top:1290px;font-size:24.1px;line-height:24.1px;color:#1e1e1e;font-weight:400;transform:scaleX(0.89);transform-origin:0 0;-webkit-text-stroke:0.45px currentColor;">Patrick Marther, Olivia C...</div>
<div class="t" style="left:1000px;top:1290px;font-size:24.1px;line-height:24.1px;color:#1e1e1e;font-weight:400;transform:scaleX(0.9);transform-origin:0 0;-webkit-text-stroke:0.45px currentColor;">RE-2104155</div>
<svg class="r" style="left:1378px;top:1292px" width="24" height="24" viewBox="0 0 24 24"><polygon points="12,1 23,6 1,6" fill="#8c8c8c"/><rect x="1" y="6" width="22" height="2" fill="#8c8c8c"/><rect x="3" y="9" width="3" height="11" fill="#8c8c8c"/><rect x="8" y="9" width="3" height="11" fill="#8c8c8c"/><rect x="13" y="9" width="3" height="11" fill="#8c8c8c"/><rect x="18" y="9" width="3" height="11" fill="#8c8c8c"/><rect x="1" y="20" width="22" height="3" fill="#8c8c8c"/></svg>
<div class="t" style="left:1412px;top:1290px;font-size:24.1px;line-height:24.1px;color:#1e1e1e;font-weight:400;transform:scaleX(0.89);transform-origin:0 0;-webkit-text-stroke:0.45px currentColor;">1020 Bank</div>
<svg class="r" style="left:1660px;top:1292px" width="24" height="24" viewBox="0 0 24 24"><polygon points="12,1 23,6 1,6" fill="#8c8c8c"/><rect x="1" y="6" width="22" height="2" fill="#8c8c8c"/><rect x="3" y="9" width="3" height="11" fill="#8c8c8c"/><rect x="8" y="9" width="3" height="11" fill="#8c8c8c"/><rect x="13" y="9" width="3" height="11" fill="#8c8c8c"/><rect x="18" y="9" width="3" height="11" fill="#8c8c8c"/><rect x="1" y="20" width="22" height="3" fill="#8c8c8c"/></svg>
<div class="t" style="left:1694px;top:1290px;font-size:24.1px;line-height:24.1px;color:#1e1e1e;font-weight:400;transform:scaleX(0.89);transform-origin:0 0;-webkit-text-stroke:0.45px currentColor;">1100 Debitoren</div>
<div class="r" style="left:70px;top:1368px;width:2392px;height:1px;background:#a7a7a7"></div>
<div class="r" style="left:70px;top:1369px;width:2392px;height:1px;background:#959595"></div>
<div class="r" style="left:18px;top:1326px;width:50px;height:42px;background:linear-gradient(#a4a4a4,#989898)"></div>
<div class="r" style="left:18px;top:1368px;width:50px;height:1px;background:#939393"></div>
<div class="r" style="left:18px;top:1369px;width:50px;height:1px;background:#a6a6a6"></div>
<div class="r" style="left:68px;top:1326px;width:2px;height:44px;background:#8e8e8e"></div>
<div class="t" style="left:82px;top:1334px;font-size:24.1px;line-height:24.1px;color:#1e1e1e;font-weight:400;transform:scaleX(0.9);transform-origin:0 0;-webkit-text-stroke:0.45px currentColor;">15.04.2022</div>
<div class="t" style="left:241px;top:1334px;font-size:24.1px;line-height:24.1px;color:#1e1e1e;font-weight:400;transform:scaleX(0.915);transform-origin:0 0;-webkit-text-stroke:0.45px currentColor;">Zahlung</div>
<div class="t" style="left:2127px;top:1334px;font-size:24.1px;line-height:24.1px;color:#1e1e1e;font-weight:400;transform:scaleX(0.82);transform-origin:0 0;-webkit-text-stroke:0.45px currentColor;">CHF</div>
<div class="t" style="left:1611px;width:800px;text-align:right;top:1334px;font-size:24.1px;line-height:24.1px;color:#1e1e1e;font-weight:400;transform:scaleX(0.913);transform-origin:100% 0;-webkit-text-stroke:0.45px currentColor;">4 071.87</div>
<div class="t" style="left:716px;top:1334px;font-size:24.1px;line-height:24.1px;color:#1e1e1e;font-weight:400;transform:scaleX(0.89);transform-origin:0 0;-webkit-text-stroke:0.45px currentColor;">Patrick Marther, Olivia C...</div>
<div class="t" style="left:1000px;top:1334px;font-size:24.1px;line-height:24.1px;color:#1e1e1e;font-weight:400;transform:scaleX(0.9);transform-origin:0 0;-webkit-text-stroke:0.45px currentColor;">RE-2104155</div>
<svg class="r" style="left:1378px;top:1336px" width="24" height="24" viewBox="0 0 24 24"><polygon points="12,1 23,6 1,6" fill="#8c8c8c"/><rect x="1" y="6" width="22" height="2" fill="#8c8c8c"/><rect x="3" y="9" width="3" height="11" fill="#8c8c8c"/><rect x="8" y="9" width="3" height="11" fill="#8c8c8c"/><rect x="13" y="9" width="3" height="11" fill="#8c8c8c"/><rect x="18" y="9" width="3" height="11" fill="#8c8c8c"/><rect x="1" y="20" width="22" height="3" fill="#8c8c8c"/></svg>
<div class="t" style="left:1412px;top:1334px;font-size:24.1px;line-height:24.1px;color:#1e1e1e;font-weight:400;transform:scaleX(0.89);transform-origin:0 0;-webkit-text-stroke:0.45px currentColor;">1020 Bank</div>
<svg class="r" style="left:1660px;top:1336px" width="24" height="24" viewBox="0 0 24 24"><polygon points="12,1 23,6 1,6" fill="#8c8c8c"/><rect x="1" y="6" width="22" height="2" fill="#8c8c8c"/><rect x="3" y="9" width="3" height="11" fill="#8c8c8c"/><rect x="8" y="9" width="3" height="11" fill="#8c8c8c"/><rect x="13" y="9" width="3" height="11" fill="#8c8c8c"/><rect x="18" y="9" width="3" height="11" fill="#8c8c8c"/><rect x="1" y="20" width="22" height="3" fill="#8c8c8c"/></svg>
<div class="t" style="left:1694px;top:1334px;font-size:24.1px;line-height:24.1px;color:#1e1e1e;font-weight:400;transform:scaleX(0.89);transform-origin:0 0;-webkit-text-stroke:0.45px currentColor;">1100 Debitoren</div>
<div class="r" style="left:70px;top:1412px;width:2392px;height:1px;background:#a7a7a7"></div>
<div class="r" style="left:70px;top:1413px;width:2392px;height:1px;background:#959595"></div>
<div class="r" style="left:18px;top:1370px;width:50px;height:42px;background:linear-gradient(#a4a4a4,#989898)"></div>
<div class="r" style="left:18px;top:1412px;width:50px;height:1px;background:#939393"></div>
<div class="r" style="left:18px;top:1413px;width:50px;height:1px;background:#a6a6a6"></div>
<div class="r" style="left:68px;top:1370px;width:2px;height:44px;background:#8e8e8e"></div>
<div class="t" style="left:82px;top:1378px;font-size:24.1px;line-height:24.1px;color:#1e1e1e;font-weight:400;transform:scaleX(0.9);transform-origin:0 0;-webkit-text-stroke:0.45px currentColor;">15.04.2022</div>
<div class="t" style="left:241px;top:1378px;font-size:24.1px;line-height:24.1px;color:#1e1e1e;font-weight:400;transform:scaleX(0.915);transform-origin:0 0;-webkit-text-stroke:0.45px currentColor;">Website Arbeiten</div>
<div class="t" style="left:2127px;top:1378px;font-size:24.1px;line-height:24.1px;color:#1e1e1e;font-weight:400;transform:scaleX(0.82);transform-origin:0 0;-webkit-text-stroke:0.45px currentColor;">CHF</div>
<div class="t" style="left:1611px;width:800px;text-align:right;top:1378px;font-size:24.1px;line-height:24.1px;color:#1e1e1e;font-weight:400;transform:scaleX(0.913);transform-origin:100% 0;-webkit-text-stroke:0.45px currentColor;">3 618.72</div>
<div class="t" style="left:716px;top:1378px;font-size:24.1px;line-height:24.1px;color:#1e1e1e;font-weight:400;transform:scaleX(0.89);transform-origin:0 0;-webkit-text-stroke:0.45px currentColor;">Patrick Marther, Olivia C...</div>
<div class="t" style="left:1000px;top:1378px;font-size:24.1px;line-height:24.1px;color:#1e1e1e;font-weight:400;transform:scaleX(0.9);transform-origin:0 0;-webkit-text-stroke:0.45px currentColor;">RE-2104155</div>
<svg class="r" style="left:1378px;top:1380px" width="24" height="24" viewBox="0 0 24 24"><polygon points="12,1 23,6 1,6" fill="#8c8c8c"/><rect x="1" y="6" width="22" height="2" fill="#8c8c8c"/><rect x="3" y="9" width="3" height="11" fill="#8c8c8c"/><rect x="8" y="9" width="3" height="11" fill="#8c8c8c"/><rect x="13" y="9" width="3" height="11" fill="#8c8c8c"/><rect x="18" y="9" width="3" height="11" fill="#8c8c8c"/><rect x="1" y="20" width="22" height="3" fill="#8c8c8c"/></svg>
<div class="t" style="left:1412px;top:1378px;font-size:24.1px;line-height:24.1px;color:#1e1e1e;font-weight:400;transform:scaleX(0.89);transform-origin:0 0;-webkit-text-stroke:0.45px currentColor;">1100 Debitoren</div>
<svg class="r" style="left:1660px;top:1380px" width="24" height="24" viewBox="0 0 24 24"><polygon points="12,1 23,6 1,6" fill="#8c8c8c"/><rect x="1" y="6" width="22" height="2" fill="#8c8c8c"/><rect x="3" y="9" width="3" height="11" fill="#8c8c8c"/><rect x="8" y="9" width="3" height="11" fill="#8c8c8c"/><rect x="13" y="9" width="3" height="11" fill="#8c8c8c"/><rect x="18" y="9" width="3" height="11" fill="#8c8c8c"/><rect x="1" y="20" width="22" height="3" fill="#8c8c8c"/></svg>
<div class="t" style="left:1694px;top:1378px;font-size:24.1px;line-height:24.1px;color:#1e1e1e;font-weight:400;transform:scaleX(0.89);transform-origin:0 0;-webkit-text-stroke:0.45px currentColor;">3403 Ertrag aus Web...</div>
<div class="r" style="left:70px;top:1456px;width:2392px;height:1px;background:#a7a7a7"></div>
<div class="r" style="left:70px;top:1457px;width:2392px;height:1px;background:#959595"></div>
<div class="r" style="left:18px;top:1414px;width:50px;height:42px;background:linear-gradient(#a4a4a4,#989898)"></div>
<div class="r" style="left:18px;top:1456px;width:50px;height:1px;background:#939393"></div>
<div class="r" style="left:18px;top:1457px;width:50px;height:1px;background:#a6a6a6"></div>
<div class="r" style="left:68px;top:1414px;width:2px;height:44px;background:#8e8e8e"></div>
<div class="t" style="left:82px;top:1422px;font-size:24.1px;line-height:24.1px;color:#1e1e1e;font-weight:400;transform:scaleX(0.9);transform-origin:0 0;-webkit-text-stroke:0.45px currentColor;">15.04.2022</div>
<div class="t" style="left:241px;top:1422px;font-size:24.1px;line-height:24.1px;color:#1e1e1e;font-weight:400;transform:scaleX(0.915);transform-origin:0 0;-webkit-text-stroke:0.45px currentColor;">Website Arbeiten</div>
<div class="t" style="left:2127px;top:1422px;font-size:24.1px;line-height:24.1px;color:#1e1e1e;font-weight:400;transform:scaleX(0.82);transform-origin:0 0;-webkit-text-stroke:0.45px currentColor;">CHF</div>
<div class="t" style="left:1611px;width:800px;text-align:right;top:1422px;font-size:24.1px;line-height:24.1px;color:#1e1e1e;font-weight:400;transform:scaleX(0.913);transform-origin:100% 0;-webkit-text-stroke:0.45px currentColor;">953.15</div>
<div class="t" style="left:716px;top:1422px;font-size:24.1px;line-height:24.1px;color:#1e1e1e;font-weight:400;transform:scaleX(0.89);transform-origin:0 0;-webkit-text-stroke:0.45px currentColor;">Patrick Marther, Olivia C...</div>
<div class="t" style="left:1000px;top:1422px;font-size:24.1px;line-height:24.1px;color:#1e1e1e;font-weight:400;transform:scaleX(0.9);transform-origin:0 0;-webkit-text-stroke:0.45px currentColor;">RE-2104155</div>
<svg class="r" style="left:1378px;top:1424px" width="24" height="24" viewBox="0 0 24 24"><polygon points="12,1 23,6 1,6" fill="#8c8c8c"/><rect x="1" y="6" width="22" height="2" fill="#8c8c8c"/><rect x="3" y="9" width="3" height="11" fill="#8c8c8c"/><rect x="8" y="9" width="3" height="11" fill="#8c8c8c"/><rect x="13" y="9" width="3" height="11" fill="#8c8c8c"/><rect x="18" y="9" width="3" height="11" fill="#8c8c8c"/><rect x="1" y="20" width="22" height="3" fill="#8c8c8c"/></svg>
<div class="t" style="left:1412px;top:1422px;font-size:24.1px;line-height:24.1px;color:#1e1e1e;font-weight:400;transform:scaleX(0.89);transform-origin:0 0;-webkit-text-stroke:0.45px currentColor;">1100 Debitoren</div>
<svg class="r" style="left:1660px;top:1424px" width="24" height="24" viewBox="0 0 24 24"><polygon points="12,1 23,6 1,6" fill="#8c8c8c"/><rect x="1" y="6" width="22" height="2" fill="#8c8c8c"/><rect x="3" y="9" width="3" height="11" fill="#8c8c8c"/><rect x="8" y="9" width="3" height="11" fill="#8c8c8c"/><rect x="13" y="9" width="3" height="11" fill="#8c8c8c"/><rect x="18" y="9" width="3" height="11" fill="#8c8c8c"/><rect x="1" y="20" width="22" height="3" fill="#8c8c8c"/></svg>
<div class="t" style="left:1694px;top:1422px;font-size:24.1px;line-height:24.1px;color:#1e1e1e;font-weight:400;transform:scaleX(0.89);transform-origin:0 0;-webkit-text-stroke:0.45px currentColor;">3402 Ertrag aus graf...</div>
<div class="r" style="left:70px;top:1500px;width:2392px;height:1px;background:#a7a7a7"></div>
<div class="r" style="left:70px;top:1501px;width:2392px;height:1px;background:#959595"></div>
<div class="r" style="left:18px;top:1458px;width:50px;height:42px;background:linear-gradient(#a4a4a4,#989898)"></div>
<div class="r" style="left:18px;top:1500px;width:50px;height:1px;background:#939393"></div>
<div class="r" style="left:18px;top:1501px;width:50px;height:1px;background:#a6a6a6"></div>
<div class="r" style="left:68px;top:1458px;width:2px;height:44px;background:#8e8e8e"></div>
<div class="t" style="left:82px;top:1466px;font-size:24.1px;line-height:24.1px;color:#1e1e1e;font-weight:400;transform:scaleX(0.9);transform-origin:0 0;-webkit-text-stroke:0.45px currentColor;">15.04.2022</div>
<div class="t" style="left:241px;top:1466px;font-size:24.1px;line-height:24.1px;color:#1e1e1e;font-weight:400;transform:scaleX(0.915);transform-origin:0 0;-webkit-text-stroke:0.45px currentColor;">Website Arbeiten</div>
<div class="t" style="left:2127px;top:1466px;font-size:24.1px;line-height:24.1px;color:#1e1e1e;font-weight:400;transform:scaleX(0.82);transform-origin:0 0;-webkit-text-stroke:0.45px currentColor;">CHF</div>
<div class="t" style="left:1611px;width:800px;text-align:right;top:1466px;font-size:24.1px;line-height:24.1px;color:#1e1e1e;font-weight:400;transform:scaleX(0.913);transform-origin:100% 0;-webkit-text-stroke:0.45px currentColor;">100.00</div>
<div class="r" style="left:588px;top:278px;width:1428px;height:1026px;border:2px solid #a0aec6;border-radius:10px;background:linear-gradient(#c4cde1 0px,#d0d9e5 120px,#d0d9e5 100%)"></div>
<div class="r" style="left:590px;top:280px;width:1424px;height:1022px;border:2px solid #f0f4fc;border-radius:8px"></div>
<svg class="r" style="left:598px;top:288px;" width="38" height="40" viewBox="0 0 38 40"><rect x="5.2" y="5.1" width="26" height="30" fill="#fafafa" stroke="#a5abb8" stroke-width="1.6"/>
<g transform="translate(10.5,29.5) rotate(-37) scale(0.9)">
<path d="M0 0 L7 -4.6 L7 4.6 Z" fill="#ebc79c"/>
<path d="M0 0 L2.6 -1.7 L2.6 1.7 Z" fill="#6a4a22"/>
<rect x="7" y="-4.6" width="17.5" height="9.2" fill="#efdd6e" stroke="#d39a4a" stroke-width="1.1"/>
<rect x="7.5" y="-3.8" width="16.5" height="2.5" fill="#f6eaa6"/>
<rect x="24.5" y="-4.6" width="6.5" height="9.2" rx="2.2" fill="#f3d4ae" stroke="#d39a4a" stroke-width="1.1"/>
</g></svg>
<div class="t" style="left:637.5px;top:295px;font-size:28px;line-height:28px;color:#555555;font-weight:300;transform:scaleX(0.955);transform-origin:0 0;">Buchung bearbeiten</div>
<div class="r" style="left:1940px;top:294px;width:30px;height:30px;border:2px solid #9dbbea;border-radius:6px;background:linear-gradient(#ffffff 0,#ffffff 40%,#d6e4f8 60%,#e6effb 100%)"></div>
<div class="r" style="left:1974px;top:294px;width:30px;height:30px;border:2px solid #9dbbea;border-radius:6px;background:linear-gradient(#ffffff 0,#ffffff 40%,#d6e4f8 60%,#e6effb 100%)"></div>
<div class="t" style="left:1940.0px;width:30px;text-align:center;top:298px;font-size:24px;line-height:24px;color:#5b7fa8;font-weight:700;">?</div>
<svg class="r" style="left:1980px;top:300px" width="18" height="18" viewBox="0 0 18 18"><path d="M2 2 L16 16 M16 2 L2 16" stroke="#4a5a9a" stroke-width="2.6"/></svg>
<div class="r" style="left:598px;top:378px;width:1407px;height:7px;background:#dfe8f6;border-top:2px solid #99b9e6;border-bottom:2px solid #99b9e6"></div>
<div class="r" style="left:602px;top:339px;width:120px;height:42px;border:2px solid #8fb0e2;border-bottom:none;border-radius:9px 9px 0 0;background:linear-gradient(#ffffff 0,#ffffff 25%,#dfe8f7 60%,#dfe8f7 100%)"></div>
<div class="r" style="left:604px;top:378px;width:116px;height:5px;background:#dfe8f7"></div>
<div class="t" style="left:621.5px;top:349px;font-size:23.3px;line-height:23.3px;color:#14375e;font-weight:700;transform:scaleX(1.02);transform-origin:0 0;">Eintrag</div>
<div class="r" style="left:728px;top:340px;width:187px;height:39px;border:2px solid #b3cbee;border-bottom:none;border-radius:9px 9px 0 0;background:linear-gradient(#ffffff 0,#e9eff9 40%,#eef3fb 100%)"></div>
<div class="t" style="left:747px;top:349px;font-size:23.3px;line-height:23.3px;color:#bcaeab;font-weight:700;transform:scaleX(0.98);transform-origin:0 0;">Kostenstellen</div>
<div class="r" style="left:923px;top:339px;width:55px;height:40px;border:2px solid #8fb0e2;border-bottom:none;border-radius:9px 9px 0 0;background:linear-gradient(#d3e0f4,#e4ecf8)"></div>
<div class="r" style="left:942px;top:358px;width:17px;height:4px;background:#4a6aa3"></div>
<div class="r" style="left:948.5px;top:352px;width:4px;height:16px;background:#4a6aa3"></div>
<div class="r" style="left:598px;top:383px;width:1407px;height:854px;border:2px solid #99b9e6;background:#fff"></div>
<div class="r" style="left:1078px;top:385px;width:2px;height:850px;background:#99b9e6"></div>
<div class="r" style="left:1080px;top:385px;width:923px;height:161px;background:#dfe5f3"></div>
<div class="r" style="left:1080px;top:546px;width:923px;height:2px;background:#99b9e6"></div>
<div class="r" style="left:1080px;top:548px;width:923px;height:264px;background:linear-gradient(#eff2fc,#f7f8fc)"></div>
<div class="r" style="left:1080px;top:812px;width:923px;height:2px;background:#99b9e6"></div>
<div class="r" style="left:1080px;top:814px;width:923px;height:421px;background:#dfe5f3"></div>
<div class="t" style="left:630px;top:421px;font-size:24.7px;line-height:24.7px;color:#9a9a9a;font-weight:400;transform:scaleX(0.945);transform-origin:0 0;-webkit-text-stroke:0.45px currentColor;">Rohdaten</div>
<div class="t" style="left:630px;top:460px;font-size:25.9px;line-height:25.9px;color:#383838;font-weight:400;transform:scaleX(0.92);transform-origin:0 0;-webkit-text-stroke:0.45px currentColor;">Datum: 10.03.2022</div>
<div class="t" style="left:630px;top:490px;font-size:25.9px;line-height:25.9px;color:#383838;font-weight:400;transform:scaleX(0.92);transform-origin:0 0;-webkit-text-stroke:0.45px currentColor;">Beschreibung: Zahlung</div>
<div class="t" style="left:630px;top:520px;font-size:25.9px;line-height:25.9px;color:#383838;font-weight:400;transform:scaleX(0.92);transform-origin:0 0;-webkit-text-stroke:0.45px currentColor;">Geschäftspartner: Agnes Helbner,</div>
<div class="t" style="left:630px;top:550px;font-size:25.9px;line-height:25.9px;color:#383838;font-weight:400;transform:scaleX(0.92);transform-origin:0 0;-webkit-text-stroke:0.45px currentColor;">Elektro Helbner GmbH</div>
<div class="t" style="left:630px;top:580px;font-size:25.9px;line-height:25.9px;color:#383838;font-weight:400;transform:scaleX(0.92);transform-origin:0 0;-webkit-text-stroke:0.45px currentColor;">Referenz / Beleg: RE-2102094</div>
<div class="t" style="left:630px;top:610px;font-size:25.9px;line-height:25.9px;color:#383838;font-weight:400;transform:scaleX(0.92);transform-origin:0 0;-webkit-text-stroke:0.45px currentColor;">Soll: 1020 Bank</div>
<div class="t" style="left:630px;top:640px;font-size:25.9px;line-height:25.9px;color:#383838;font-weight:400;transform:scaleX(0.92);transform-origin:0 0;-webkit-text-stroke:0.45px currentColor;">Haben: 1100 Debitoren</div>
<div class="t" style="left:630px;top:670px;font-size:25.9px;line-height:25.9px;color:#383838;font-weight:400;transform:scaleX(0.92);transform-origin:0 0;-webkit-text-stroke:0.45px currentColor;">Steuersatz:</div>
<div class="t" style="left:630px;top:700px;font-size:25.9px;line-height:25.9px;color:#383838;font-weight:400;transform:scaleX(0.92);transform-origin:0 0;-webkit-text-stroke:0.45px currentColor;">Währung: CHF</div>
<div class="t" style="left:630px;top:730px;font-size:25.9px;line-height:25.9px;color:#383838;font-weight:400;transform:scaleX(0.92);transform-origin:0 0;-webkit-text-stroke:0.45px currentColor;">Wechselkurs: 1.00</div>
<div class="t" style="left:630px;top:760px;font-size:25.9px;line-height:25.9px;color:#383838;font-weight:400;transform:scaleX(0.92);transform-origin:0 0;-webkit-text-stroke:0.45px currentColor;">Betrag: 28002.00</div>
<div class="t" style="left:630px;top:790px;font-size:25.9px;line-height:25.9px;color:#383838;font-weight:400;transform:scaleX(0.92);transform-origin:0 0;-webkit-text-stroke:0.45px currentColor;">Anhänge: 0</div>
<div class="t" style="left:630px;top:820px;font-size:25.9px;line-height:25.9px;color:#383838;font-weight:400;transform:scaleX(0.92);transform-origin:0 0;-webkit-text-stroke:0.45px currentColor;">Notizen:</div>
<div class="t" style="left:1100px;top:418px;font-size:23.7px;line-height:23.7px;color:#464c6c;font-weight:400;transform:scaleX(0.91);transform-origin:0 0;-webkit-text-stroke:0.45px currentColor;">Datum</div>
<div class="t" style="left:1552px;top:418px;font-size:23.7px;line-height:23.7px;color:#7a8099;font-weight:400;transform:scaleX(0.91);transform-origin:0 0;-webkit-text-stroke:0.45px currentColor;">Typ</div>
<div class="r" style="left:1100px;top:444px;width:432px;height:43px;border:2px solid #b0b3c6;background:linear-gradient(#e2e2e2 0,#ffffff 6px,#ffffff 100%)"></div>
<div class="r" style="left:1496px;top:446px;width:34px;height:39px;background:linear-gradient(#f6f6f6 0,#ececec 40%,#d3d3d3 60%,#d2d2d2 100%);border-left:2px solid #b0b3c6;border-top-right-radius:3px"></div>
<svg class="r" style="left:1502px;top:452px" width="24" height="24" viewBox="0 0 24 24"><rect x="1.5" y="1.5" width="21" height="21" rx="1.5" fill="#e6e6e6" stroke="#7b93bd" stroke-width="2.5"/><rect x="1.5" y="1.5" width="21" height="4" fill="#7b93bd"/><rect x="5" y="9" width="4" height="4" fill="#fafafa"/><rect x="5" y="15" width="4" height="4" fill="#fafafa"/><rect x="10.5" y="15" width="3" height="4" fill="#fafafa"/><rect x="15" y="15" width="4" height="4" fill="#fafafa"/><circle cx="16.5" cy="10.5" r="3.2" fill="#fafafa" stroke="#a32626" stroke-width="2.2"/></svg>
<div class="t" style="left:1108px;top:452px;font-size:26px;line-height:26px;color:#0a0a0a;font-weight:400;transform:scaleX(0.925);transform-origin:0 0;-webkit-text-stroke:0.45px currentColor;">10.03.2022</div>
<div class="r" style="left:1552px;top:444px;width:432px;height:43px;border:2px solid #c3c6d4;background:linear-gradient(#e4e6ea 0,#f3f5f8 5px,#f3f5f8 100%)"></div>
<div class="r" style="left:1948px;top:446px;width:34px;height:39px;background:linear-gradient(#f6f7f9 0,#eff1f5 40%,#e2e4e9 60%,#e0e2e8 100%);border-left:2px solid #c3c6d4;border-top-right-radius:3px"></div>
<svg class="r" style="left:1956px;top:458px" width="20" height="14" viewBox="0 0 20 14"><path d="M2.5 2.5 L10 10 L17.5 2.5" stroke="#7f94c2" stroke-width="3.6" fill="none"/></svg>
<svg class="r" style="left:1562px;top:451px" width="31" height="31" viewBox="0 0 31 31"><defs><linearGradient id="mg" x1="0" y1="0" x2="0" y2="1"><stop offset="0" stop-color="#fbfbfb"/><stop offset="1" stop-color="#dcdcdc"/></linearGradient></defs><circle cx="15.5" cy="15.5" r="13.3" fill="url(#mg)" stroke="#a3a3a3" stroke-width="2.4"/><rect x="7.5" y="13" width="16" height="5" rx="1" fill="#606060"/></svg>
<div class="t" style="left:1604px;top:453px;font-size:26px;line-height:26px;color:#555a63;font-weight:400;transform:scaleX(0.88);transform-origin:0 0;-webkit-text-stroke:0.45px currentColor;">Ausgang</div>
<svg class="r" style="left:1100px;top:581px" width="22" height="22" viewBox="0 0 22 22"><circle cx="8.5" cy="8.5" r="6.5" stroke="#454a6a" stroke-width="3" fill="none"/><path d="M13 13 L19.5 19.5" stroke="#454a6a" stroke-width="3.5"/></svg>
<div class="t" style="left:1127px;top:580px;font-size:23.7px;line-height:23.7px;color:#464c6c;font-weight:400;transform:scaleX(0.91);transform-origin:0 0;-webkit-text-stroke:0.45px currentColor;">Beschreibung</div>
<svg class="r" style="left:1264px;top:580px" width="21" height="21" viewBox="0 0 21 21"><circle cx="10.5" cy="10.5" r="10" fill="#b6bccb"/><rect x="8.8" y="9" width="3.4" height="8" fill="#eef1fb"/><circle cx="10.5" cy="5.5" r="1.9" fill="#eef1fb"/></svg>
<div class="r" style="left:1100px;top:606px;width:884px;height:44px;border:2px solid #b0b3c6;background:linear-gradient(#e2e2e2 0,#ffffff 6px,#ffffff 100%)"></div>
<div class="t" style="left:1108px;top:614px;font-size:26px;line-height:26px;color:#0a0a0a;font-weight:400;transform:scaleX(0.925);transform-origin:0 0;-webkit-text-stroke:0.45px currentColor;">Zahlung</div>
<div class="t" style="left:1100px;top:682px;font-size:23.7px;line-height:23.7px;color:#464c6c;font-weight:400;transform:scaleX(0.91);transform-origin:0 0;-webkit-text-stroke:0.45px currentColor;">Auftrag</div>
<div class="t" style="left:1552px;top:682px;font-size:23.7px;line-height:23.7px;color:#7a8099;font-weight:400;transform:scaleX(0.91);transform-origin:0 0;-webkit-text-stroke:0.45px currentColor;">Status</div>
<div class="r" style="left:1100px;top:708px;width:432px;height:43px;border:2px solid #b0b3c6;background:linear-gradient(#e2e2e2 0,#ffffff 6px,#ffffff 100%)"></div>
<div class="r" style="left:1496px;top:710px;width:34px;height:39px;background:linear-gradient(#f6f6f6 0,#ececec 40%,#d3d3d3 60%,#d2d2d2 100%);border-left:2px solid #b0b3c6;border-top-right-radius:3px"></div>
<svg class="r" style="left:1504px;top:722px" width="20" height="14" viewBox="0 0 20 14"><path d="M2.5 2.5 L10 10 L17.5 2.5" stroke="#2f4d8e" stroke-width="3.6" fill="none"/></svg>
<div class="t" style="left:1108px;top:716px;font-size:26px;line-height:26px;color:#b5b5b5;font-weight:400;transform:scaleX(0.916);transform-origin:0 0;-webkit-text-stroke:0.45px currentColor;">Dokument auswählen</div>
<div class="r" style="left:1552px;top:708px;width:432px;height:43px;border:2px solid #c3c6d4;background:linear-gradient(#e4e6ea 0,#f3f5f8 5px,#f3f5f8 100%)"></div>
<div class="r" style="left:1948px;top:710px;width:34px;height:39px;background:linear-gradient(#f6f7f9 0,#eff1f5 40%,#e2e4e9 60%,#e0e2e8 100%);border-left:2px solid #c3c6d4;border-top-right-radius:3px"></div>
<svg class="r" style="left:1956px;top:722px" width="20" height="14" viewBox="0 0 20 14"><path d="M2.5 2.5 L10 10 L17.5 2.5" stroke="#7f94c2" stroke-width="3.6" fill="none"/></svg>
<div class="t" style="left:1100px;top:866px;font-size:23.7px;line-height:23.7px;color:#464c6c;font-weight:400;transform:scaleX(0.91);transform-origin:0 0;-webkit-text-stroke:0.45px currentColor;">Geschäftspartner</div>
<div class="t" style="left:1552px;top:866px;font-size:23.7px;line-height:23.7px;color:#464c6c;font-weight:400;transform:scaleX(0.91);transform-origin:0 0;-webkit-text-stroke:0.45px currentColor;">Referenz / Beleg</div>
<div class="r" style="left:1100px;top:892px;width:432px;height:43px;border:2px solid #b0b3c6;background:linear-gradient(#e2e2e2 0,#ffffff 6px,#ffffff 100%)"></div>
<div class="r" style="left:1496px;top:894px;width:34px;height:39px;background:linear-gradient(#f6f6f6 0,#ececec 40%,#d3d3d3 60%,#d2d2d2 100%);border-left:2px solid #b0b3c6;border-top-right-radius:3px"></div>
<svg class="r" style="left:1504px;top:910px" width="18" height="6" viewBox="0 0 18 6"><rect x="0" y="0" width="4" height="4" fill="#111"/><rect x="6.5" y="0" width="4" height="4" fill="#111"/><rect x="13" y="0" width="4" height="4" fill="#111"/></svg>
<div class="r" style="left:1462px;top:894px;width:34px;height:39px;background:linear-gradient(#f6f6f6 0,#ececec 40%,#d3d3d3 60%,#d2d2d2 100%);border-left:2px solid #b0b3c6"></div>
<svg class="r" style="left:1470px;top:906px" width="20" height="14" viewBox="0 0 20 14"><path d="M2.5 2.5 L10 10 L17.5 2.5" stroke="#2f4d8e" stroke-width="3.6" fill="none"/></svg>
<div class="r" style="left:1102px;top:894px;width:324px;height:39px;overflow:hidden"><div class="t" style="left:6px;top:6px;font-size:26px;line-height:26px;color:#0a0a0a;font-weight:400;transform:scaleX(0.884);transform-origin:0 0;-webkit-text-stroke:0.45px currentColor;">Agnes Helbner, Elektro Helbner</div></div>
<svg class="r" style="left:1436px;top:906px" width="18" height="16" viewBox="0 0 18 16"><path d="M2 1 L16 15 M16 1 L2 15" stroke="#9a9a9a" stroke-width="2.6"/></svg>
<div class="r" style="left:1552px;top:892px;width:432px;height:43px;border:2px solid #b0b3c6;background:linear-gradient(#e2e2e2 0,#ffffff 6px,#ffffff 100%)"></div>
<div class="t" style="left:1560px;top:900px;font-size:26px;line-height:26px;color:#0a0a0a;font-weight:400;transform:scaleX(0.884);transform-origin:0 0;-webkit-text-stroke:0.45px currentColor;">RE-2102094</div>
<div class="t" style="left:1100px;top:968px;font-size:23.7px;line-height:23.7px;color:#464c6c;font-weight:400;transform:scaleX(0.91);transform-origin:0 0;-webkit-text-stroke:0.45px currentColor;">Soll</div>
<div class="t" style="left:704px;width:800px;text-align:right;top:968px;font-size:23.3px;line-height:23.3px;color:#9a9a9a;font-weight:400;transform:scaleX(0.92);transform-origin:100% 0;-webkit-text-stroke:0.45px currentColor;">CHF -159 395.49</div>
<svg class="r" style="left:1511px;top:968px" width="21" height="21" viewBox="0 0 21 21"><circle cx="10.5" cy="10.5" r="10" fill="#b6bccb"/><rect x="8.8" y="9" width="3.4" height="8" fill="#dfe5f3"/><circle cx="10.5" cy="5.5" r="1.9" fill="#dfe5f3"/></svg>
<div class="t" style="left:1552px;top:968px;font-size:23.7px;line-height:23.7px;color:#7a8099;font-weight:400;transform:scaleX(0.91);transform-origin:0 0;-webkit-text-stroke:0.45px currentColor;">Haben</div>
<div class="t" style="left:1156px;width:800px;text-align:right;top:968px;font-size:23.3px;line-height:23.3px;color:#b4b7c0;font-weight:400;transform:scaleX(0.92);transform-origin:100% 0;-webkit-text-stroke:0.45px currentColor;">CHF 52 721.67</div>
<svg class="r" style="left:1963px;top:968px" width="21" height="21" viewBox="0 0 21 21"><circle cx="10.5" cy="10.5" r="10" fill="#c9cdd8"/><rect x="8.8" y="9" width="3.4" height="8" fill="#dfe5f3"/><circle cx="10.5" cy="5.5" r="1.9" fill="#dfe5f3"/></svg>
<div class="r" style="left:1100px;top:995px;width:432px;height:43px;border:2px solid #b0b3c6;background:linear-gradient(#e2e2e2 0,#ffffff 6px,#ffffff 100%)"></div>
<div class="r" style="left:1496px;top:997px;width:34px;height:39px;background:linear-gradient(#f6f6f6 0,#ececec 40%,#d3d3d3 60%,#d2d2d2 100%);border-left:2px solid #b0b3c6;border-top-right-radius:3px"></div>
<svg class="r" style="left:1504px;top:1013px" width="18" height="6" viewBox="0 0 18 6"><rect x="0" y="0" width="4" height="4" fill="#111"/><rect x="6.5" y="0" width="4" height="4" fill="#111"/><rect x="13" y="0" width="4" height="4" fill="#111"/></svg>
<div class="r" style="left:1462px;top:997px;width:34px;height:39px;background:linear-gradient(#f6f6f6 0,#ececec 40%,#d3d3d3 60%,#d2d2d2 100%);border-left:2px solid #b0b3c6"></div>
<svg class="r" style="left:1470px;top:1009px" width="20" height="14" viewBox="0 0 20 14"><path d="M2.5 2.5 L10 10 L17.5 2.5" stroke="#2f4d8e" stroke-width="3.6" fill="none"/></svg>
<div class="t" style="left:1108px;top:1004px;font-size:26px;line-height:26px;color:#0a0a0a;font-weight:400;transform:scaleX(0.904);transform-origin:0 0;-webkit-text-stroke:0.45px currentColor;">1020 Bank</div>
<div class="r" style="left:1552px;top:995px;width:432px;height:43px;border:2px solid #c3c6d4;background:linear-gradient(#e4e6ea 0,#f3f5f8 5px,#f3f5f8 100%)"></div>
<div class="r" style="left:1948px;top:997px;width:34px;height:39px;background:linear-gradient(#f6f7f9 0,#eff1f5 40%,#e2e4e9 60%,#e0e2e8 100%);border-left:2px solid #c3c6d4;border-top-right-radius:3px"></div>
<svg class="r" style="left:1956px;top:1013px" width="18" height="6" viewBox="0 0 18 6"><rect x="0" y="0" width="4" height="4" fill="#555"/><rect x="6.5" y="0" width="4" height="4" fill="#555"/><rect x="13" y="0" width="4" height="4" fill="#555"/></svg>
<div class="r" style="left:1914px;top:997px;width:34px;height:39px;background:linear-gradient(#f6f7f9 0,#eff1f5 40%,#e2e4e9 60%,#e0e2e8 100%);border-left:2px solid #c3c6d4"></div>
<svg class="r" style="left:1922px;top:1009px" width="20" height="14" viewBox="0 0 20 14"><path d="M2.5 2.5 L10 10 L17.5 2.5" stroke="#7f94c2" stroke-width="3.6" fill="none"/></svg>
<div class="t" style="left:1560px;top:1004px;font-size:26px;line-height:26px;color:#555a63;font-weight:400;transform:scaleX(0.904);transform-origin:0 0;-webkit-text-stroke:0.45px currentColor;">1100 Debitoren</div>
<div class="t" style="left:1100px;top:1070px;font-size:23.7px;line-height:23.7px;color:#464c6c;font-weight:400;transform:scaleX(0.91);transform-origin:0 0;-webkit-text-stroke:0.45px currentColor;">Steuersatz</div>
<div class="t" style="left:1552px;top:1070px;font-size:23.7px;line-height:23.7px;color:#464c6c;font-weight:400;transform:scaleX(0.91);transform-origin:0 0;-webkit-text-stroke:0.45px currentColor;">Brutto</div>
<div class="t" style="left:1772px;top:1070px;font-size:23.7px;line-height:23.7px;color:#7a8099;font-weight:400;transform:scaleX(0.91);transform-origin:0 0;-webkit-text-stroke:0.45px currentColor;">Netto</div>
<div class="r" style="left:1100px;top:1097px;width:432px;height:43px;border:2px solid #b0b3c6;background:linear-gradient(#e2e2e2 0,#ffffff 6px,#ffffff 100%)"></div>
<div class="r" style="left:1496px;top:1099px;width:34px;height:39px;background:linear-gradient(#f6f6f6 0,#ececec 40%,#d3d3d3 60%,#d2d2d2 100%);border-left:2px solid #b0b3c6;border-top-right-radius:3px"></div>
<svg class="r" style="left:1504px;top:1115px" width="18" height="6" viewBox="0 0 18 6"><rect x="0" y="0" width="4" height="4" fill="#111"/><rect x="6.5" y="0" width="4" height="4" fill="#111"/><rect x="13" y="0" width="4" height="4" fill="#111"/></svg>
<div class="r" style="left:1462px;top:1099px;width:34px;height:39px;background:linear-gradient(#f6f6f6 0,#ececec 40%,#d3d3d3 60%,#d2d2d2 100%);border-left:2px solid #b0b3c6"></div>
<svg class="r" style="left:1470px;top:1111px" width="20" height="14" viewBox="0 0 20 14"><path d="M2.5 2.5 L10 10 L17.5 2.5" stroke="#2f4d8e" stroke-width="3.6" fill="none"/></svg>
<div class="r" style="left:1552px;top:1097px;width:210px;height:43px;border:2px solid #b0b3c6;background:linear-gradient(#e2e2e2 0,#ffffff 6px,#ffffff 100%)"></div>
<div class="r" style="left:1726px;top:1099px;width:34px;height:39px;background:linear-gradient(#f6f6f6 0,#ececec 40%,#d3d3d3 60%,#d2d2d2 100%);border-left:2px solid #b0b3c6;border-top-right-radius:3px"></div>
<div class="r" style="left:1726px;top:1117px;width:34px;height:2px;background:#b0b3c6"></div>
<svg class="r" style="left:1734px;top:1103px" width="20" height="32" viewBox="0 0 20 32"><path d="M3 10 L10 4 L17 10" stroke="#2f4d8e" stroke-width="3.5" fill="none"/><path d="M3 22 L10 28 L17 22" stroke="#2f4d8e" stroke-width="3.5" fill="none"/></svg>
<div class="t" style="left:1560px;top:1106px;font-size:26px;line-height:26px;color:#0a0a0a;font-weight:400;transform:scaleX(0.892);transform-origin:0 0;-webkit-text-stroke:0.45px currentColor;">28002</div>
<div class="r" style="left:1772px;top:1097px;width:212px;height:43px;border:2px solid #c3c6d4;background:linear-gradient(#e4e6ea 0,#f3f5f8 5px,#f3f5f8 100%)"></div>
<div class="r" style="left:1948px;top:1099px;width:34px;height:39px;background:linear-gradient(#f6f7f9 0,#eff1f5 40%,#e2e4e9 60%,#e0e2e8 100%);border-left:2px solid #c3c6d4;border-top-right-radius:3px"></div>
<div class="r" style="left:1948px;top:1117px;width:34px;height:2px;background:#c3c6d4"></div>
<svg class="r" style="left:1956px;top:1103px" width="20" height="32" viewBox="0 0 20 32"><path d="M3 10 L10 4 L17 10" stroke="#7f94c2" stroke-width="3.5" fill="none"/><path d="M3 22 L10 28 L17 22" stroke="#7f94c2" stroke-width="3.5" fill="none"/></svg>
<div class="t" style="left:1780px;top:1106px;font-size:26px;line-height:26px;color:#555a63;font-weight:400;transform:scaleX(0.892);transform-origin:0 0;-webkit-text-stroke:0.45px currentColor;">28002</div>
<div class="t" style="left:1100px;top:1172px;font-size:23.7px;line-height:23.7px;color:#464c6c;font-weight:400;transform:scaleX(0.91);transform-origin:0 0;-webkit-text-stroke:0.45px currentColor;">Währung</div>
<div class="t" style="left:1320px;top:1172px;font-size:23.7px;line-height:23.7px;color:#7a8099;font-weight:400;transform:scaleX(0.91);transform-origin:0 0;-webkit-text-stroke:0.45px currentColor;">Wechselkurs</div>
<div class="r" style="left:1080px;top:1150px;width:923px;height:85px;overflow:hidden">
</div>
<div class="r" style="left:1100px;top:1199px;width:209px;height:43px;border:2px solid #b0b3c6;background:linear-gradient(#e2e2e2 0,#ffffff 6px,#ffffff 100%)"></div>
<div class="r" style="left:1273px;top:1201px;width:34px;height:39px;background:linear-gradient(#f6f6f6 0,#ececec 40%,#d3d3d3 60%,#d2d2d2 100%);border-left:2px solid #b0b3c6;border-top-right-radius:3px"></div>
<svg class="r" style="left:1281px;top:1217px" width="18" height="6" viewBox="0 0 18 6"><rect x="0" y="0" width="4" height="4" fill="#111"/><rect x="6.5" y="0" width="4" height="4" fill="#111"/><rect x="13" y="0" width="4" height="4" fill="#111"/></svg>
<div class="r" style="left:1239px;top:1201px;width:34px;height:39px;background:linear-gradient(#f6f6f6 0,#ececec 40%,#d3d3d3 60%,#d2d2d2 100%);border-left:2px solid #b0b3c6"></div>
<svg class="r" style="left:1247px;top:1213px" width="20" height="14" viewBox="0 0 20 14"><path d="M2.5 2.5 L10 10 L17.5 2.5" stroke="#2f4d8e" stroke-width="3.6" fill="none"/></svg>
<div class="t" style="left:1108px;top:1208px;font-size:26px;line-height:26px;color:#0a0a0a;font-weight:400;transform:scaleX(0.892);transform-origin:0 0;-webkit-text-stroke:0.45px currentColor;">CHF</div>
<div class="r" style="left:1320px;top:1199px;width:212px;height:43px;border:2px solid #c3c6d4;background:linear-gradient(#e4e6ea 0,#f3f5f8 5px,#f3f5f8 100%)"></div>
<div class="r" style="left:1496px;top:1201px;width:34px;height:39px;background:linear-gradient(#f6f7f9 0,#eff1f5 40%,#e2e4e9 60%,#e0e2e8 100%);border-left:2px solid #c3c6d4;border-top-right-radius:3px"></div>
<svg class="r" style="left:1503px;top:1207px" width="22" height="24" viewBox="0 0 22 24"><path d="M4 11 A7 7 0 0 1 17 8 M18 13 A7 7 0 0 1 5 16" stroke="#8aa0c8" stroke-width="3" fill="none"/><polygon points="15,3 20,9 13,10" fill="#8aa0c8"/><polygon points="7,21 2,15 9,14" fill="#8aa0c8"/></svg>
<div class="r" style="left:598px;top:1235px;width:1407px;height:2px;background:#99b9e6"></div>
<div class="r" style="left:1080px;top:1237px;width:923px;height:10px;background:#d0d9e5"></div>
<svg class="r" style="left:618px;top:1254px" width="30" height="28" viewBox="0 0 30 28"><rect x="1" y="3" width="27" height="24" rx="2" fill="#e9d97a" stroke="#c2b15a" stroke-width="1.5"/><rect x="3" y="5" width="23" height="6" fill="#f3e79a"/><circle cx="11" cy="4" r="3" fill="#d24a4a"/></svg>
<svg class="r" style="left:678px;top:1252px" width="30" height="32" viewBox="0 0 30 32"><path d="M21 6 L8 20 A4 4 0 0 0 14 26 L26 13 A6.5 6.5 0 0 0 17 4 L5 17 A8.5 8.5 0 0 0 17 29 L27 19" stroke="#3a3a3a" stroke-width="2.2" fill="none" transform="translate(-1,-1)"/></svg>
<div class="t" style="left:730px;top:1257px;font-size:24px;line-height:24px;color:#111;font-weight:400;transform:scaleX(0.92);transform-origin:0 0;-webkit-text-stroke:0.45px currentColor;">97 von 359</div>
<svg class="r" style="left:1221px;top:1254px" width="16" height="28" viewBox="0 0 16 28"><polygon points="15,1 1,14 15,27" fill="#4a8cd0"/><polygon points="15,1 1,14 15,14" fill="#6aaae0"/></svg>
<div class="r" style="left:1269px;top:1247px;width:270px;height:43px;border:2px solid #a8a8a8;border-radius:5px;background:linear-gradient(#ffffff 0,#f7f7f7 50%,#e6e6e6 100%)"></div><div class="t" style="left:1269.0px;width:270px;text-align:center;top:1258px;font-size:23.4px;line-height:23.4px;color:#333;font-weight:700;transform:scaleX(1.015);transform-origin:50% 0;">Bestätigen &amp; weiter</div>
<div class="r" style="left:1553px;top:1247px;width:152px;height:43px;border:2px solid #a8a8a8;border-radius:5px;background:linear-gradient(#ffffff 0,#f7f7f7 50%,#e6e6e6 100%)"></div><div class="t" style="left:1553.0px;width:152px;text-align:center;top:1258px;font-size:23.4px;line-height:23.4px;color:#333;font-weight:400;transform:scaleX(0.915);transform-origin:50% 0;-webkit-text-stroke:0.45px currentColor;">Bestätigen</div>
<div class="r" style="left:1719px;top:1247px;width:153px;height:43px;border:2px solid #a8a8a8;border-radius:5px;background:linear-gradient(#ffffff 0,#f7f7f7 50%,#e6e6e6 100%)"></div><div class="t" style="left:1719.0px;width:153px;text-align:center;top:1258px;font-size:23.4px;line-height:23.4px;color:#333;font-weight:400;transform:scaleX(0.915);transform-origin:50% 0;-webkit-text-stroke:0.45px currentColor;">Abbrechen</div>
<svg class="r" style="left:1893px;top:1253px" width="30" height="30" viewBox="0 0 30 30"><defs><linearGradient id="rg" x1="0" y1="0" x2="0" y2="1"><stop offset="0" stop-color="#ec907e"/><stop offset="0.5" stop-color="#df6a58"/><stop offset="1" stop-color="#d65a4a"/></linearGradient></defs><circle cx="15" cy="15" r="14" fill="#d2685a"/><circle cx="15" cy="15" r="12" fill="none" stroke="#f0a898" stroke-width="1.6"/><circle cx="15" cy="15" r="10.3" fill="url(#rg)"/><rect x="9" y="12.8" width="12" height="4.4" fill="#ffffff"/></svg>
<svg class="r" style="left:1959px;top:1254px" width="16" height="28" viewBox="0 0 16 28"><polygon points="1,1 15,14 1,27" fill="#4a8cd0"/><polygon points="1,1 15,14 1,14" fill="#6aaae0"/></svg>
</div></body></html>
